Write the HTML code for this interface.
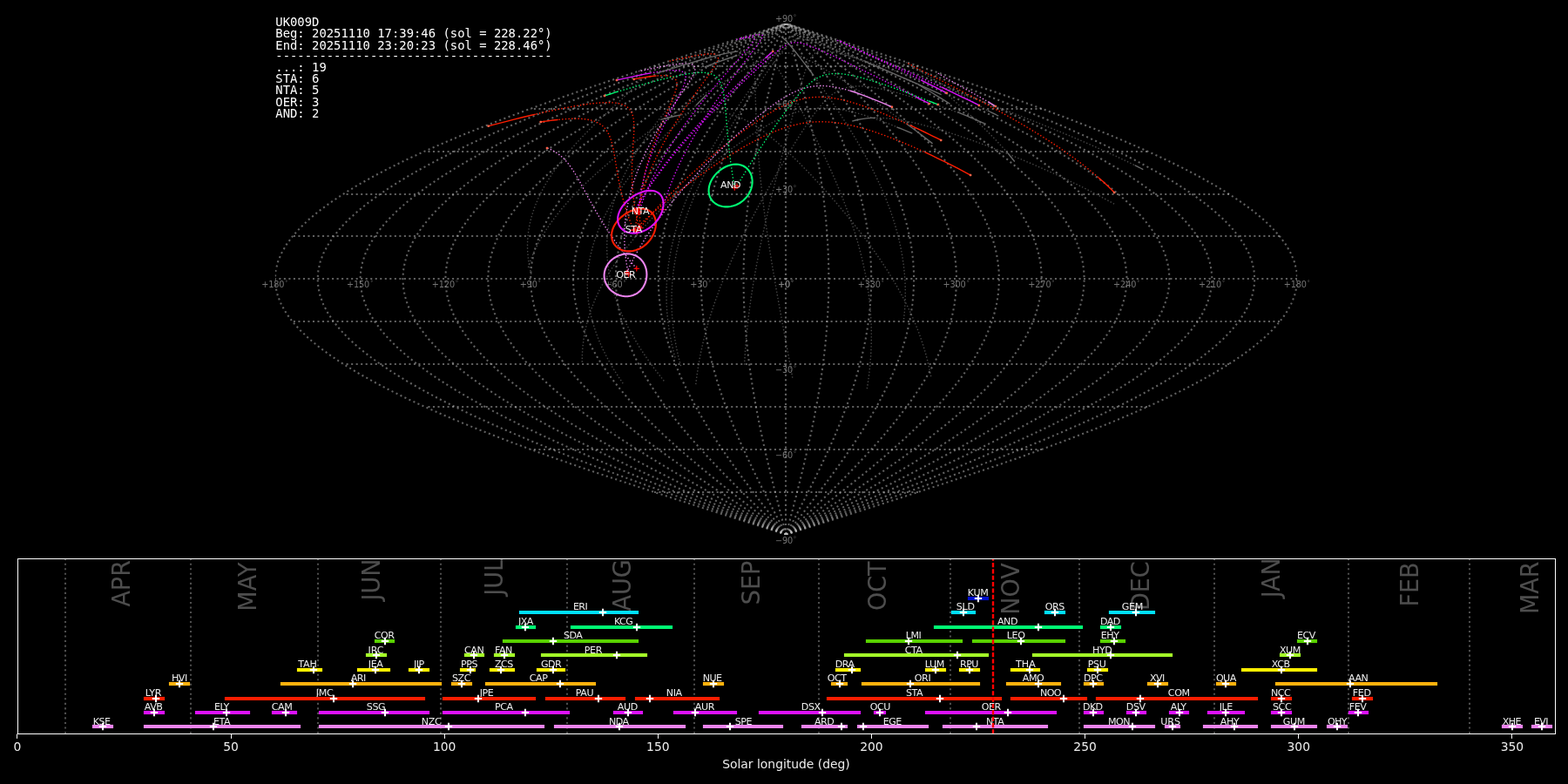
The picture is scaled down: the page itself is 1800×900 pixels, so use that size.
<!DOCTYPE html>
<html lang="en">
<head>
<meta charset="utf-8">
<title>UK009D radiant map</title>
<style>
html,body{margin:0;padding:0;background:#000;overflow:hidden}
svg{display:block;will-change:transform}
text{white-space:pre}
</style>
</head>
<body>
<svg width="1800" height="900" viewBox="0 0 1800 900" role="img" aria-label="UK009D meteor radiant map and shower activity">
<rect width="1800" height="900" fill="#000000"/>
<clipPath id="mapclip"><rect x="315.74" y="26.94" width="1173.42" height="586.71"/></clipPath>
<g id="grid" clip-path="url(#mapclip)" fill="none" stroke="#c0c0c0" stroke-opacity="0.5" stroke-width="2.08" stroke-dasharray="2.08 3.44">
<g stroke-dashoffset="0">
<path d="M902 614 L902 27"/>
<path d="M902.45 613.65 L899.89 603.88 L897.34 594.1 L894.8 584.32 L892.28 574.54 L889.8 564.76 L887.34 554.98 L884.93 545.21 L882.56 535.43 L880.25 525.65 L878 515.87 L875.82 506.09 L873.71 496.31 L871.68 486.53 L869.73 476.76 L867.88 466.98 L866.12 457.2 L864.45 447.42 L862.9 437.64 L861.45 427.86 L860.11 418.09 L858.89 408.31 L857.78 398.53 L856.8 388.75 L855.95 378.97 L855.22 369.19 L854.63 359.41 L854.16 349.64 L853.83 339.86 L853.62 330.08 L853.56 320.3 L853.62 310.52 L853.83 300.74 L854.16 290.96 L854.63 281.19 L855.22 271.41 L855.95 261.63 L856.8 251.85 L857.78 242.07 L858.89 232.29 L860.11 222.52 L861.45 212.74 L862.9 202.96 L864.45 193.18 L866.12 183.4 L867.88 173.62 L869.73 163.84 L871.68 154.07 L873.71 144.29 L875.82 134.51 L878 124.73 L880.25 114.95 L882.56 105.17 L884.93 95.39 L887.34 85.62 L889.8 75.84 L892.28 66.06 L894.8 56.28 L897.34 46.5 L899.89 36.72 L902.45 26.94"/>
<path d="M902.45 613.65 L897.33 603.88 L892.23 594.1 L887.15 584.32 L882.12 574.54 L877.14 564.76 L872.23 554.98 L867.41 545.21 L862.68 535.43 L858.06 525.65 L853.56 515.87 L849.19 506.09 L844.97 496.31 L840.91 486.53 L837.02 476.76 L833.31 466.98 L829.78 457.2 L826.46 447.42 L823.34 437.64 L820.44 427.86 L817.77 418.09 L815.32 408.31 L813.12 398.53 L811.16 388.75 L809.45 378.97 L808 369.19 L806.8 359.41 L805.87 349.64 L805.2 339.86 L804.8 330.08 L804.67 320.3 L804.8 310.52 L805.2 300.74 L805.87 290.96 L806.8 281.19 L808 271.41 L809.45 261.63 L811.16 251.85 L813.12 242.07 L815.32 232.29 L817.77 222.52 L820.44 212.74 L823.34 202.96 L826.46 193.18 L829.78 183.4 L833.31 173.62 L837.02 163.84 L840.91 154.07 L844.97 144.29 L849.19 134.51 L853.56 124.73 L858.06 114.95 L862.68 105.17 L867.41 95.39 L872.23 85.62 L877.14 75.84 L882.12 66.06 L887.15 56.28 L892.23 46.5 L897.33 36.72 L902.45 26.94"/>
<path d="M902.45 613.65 L894.77 603.88 L887.12 594.1 L879.5 584.32 L871.95 574.54 L864.49 564.76 L857.12 554.98 L849.89 545.21 L842.79 535.43 L835.86 525.65 L829.11 515.87 L822.56 506.09 L816.24 496.31 L810.14 486.53 L804.3 476.76 L798.73 466.98 L793.45 457.2 L788.46 447.42 L783.79 437.64 L779.44 427.86 L775.42 418.09 L771.76 408.31 L768.45 398.53 L765.51 388.75 L762.95 378.97 L760.77 369.19 L758.98 359.41 L757.58 349.64 L756.58 339.86 L755.97 330.08 L755.77 320.3 L755.97 310.52 L756.58 300.74 L757.58 290.96 L758.98 281.19 L760.77 271.41 L762.95 261.63 L765.51 251.85 L768.45 242.07 L771.76 232.29 L775.42 222.52 L779.44 212.74 L783.79 202.96 L788.46 193.18 L793.45 183.4 L798.73 173.62 L804.3 163.84 L810.14 154.07 L816.24 144.29 L822.56 134.51 L829.11 124.73 L835.86 114.95 L842.79 105.17 L849.89 95.39 L857.12 85.62 L864.49 75.84 L871.95 66.06 L879.5 56.28 L887.12 46.5 L894.77 36.72 L902.45 26.94"/>
<path d="M902.45 613.65 L892.21 603.88 L882.01 594.1 L871.86 584.32 L861.79 574.54 L851.83 564.76 L842.02 554.98 L832.36 545.21 L822.9 535.43 L813.66 525.65 L804.66 515.87 L795.93 506.09 L787.5 496.31 L779.37 486.53 L771.59 476.76 L764.16 466.98 L757.11 457.2 L750.46 447.42 L744.23 437.64 L738.43 427.86 L733.08 418.09 L728.2 408.31 L723.79 398.53 L719.87 388.75 L716.45 378.97 L713.54 369.19 L711.15 359.41 L709.29 349.64 L707.95 339.86 L707.15 330.08 L706.88 320.3 L707.15 310.52 L707.95 300.74 L709.29 290.96 L711.15 281.19 L713.54 271.41 L716.45 261.63 L719.87 251.85 L723.79 242.07 L728.2 232.29 L733.08 222.52 L738.43 212.74 L744.23 202.96 L750.46 193.18 L757.11 183.4 L764.16 173.62 L771.59 163.84 L779.37 154.07 L787.5 144.29 L795.93 134.51 L804.66 124.73 L813.66 114.95 L822.9 105.17 L832.36 95.39 L842.02 85.62 L851.83 75.84 L861.79 66.06 L871.86 56.28 L882.01 46.5 L892.21 36.72 L902.45 26.94"/>
<path d="M902.45 613.65 L889.66 603.88 L876.9 594.1 L864.21 584.32 L851.62 574.54 L839.18 564.76 L826.91 554.98 L814.84 545.21 L803.02 535.43 L791.47 525.65 L780.22 515.87 L769.31 506.09 L758.76 496.31 L748.6 486.53 L738.87 476.76 L729.59 466.98 L720.78 457.2 L712.47 447.42 L704.68 437.64 L697.43 427.86 L690.74 418.09 L684.63 408.31 L679.12 398.53 L674.22 388.75 L669.95 378.97 L666.32 369.19 L663.33 359.41 L661 349.64 L659.33 339.86 L658.32 330.08 L657.99 320.3 L658.32 310.52 L659.33 300.74 L661 290.96 L663.33 281.19 L666.32 271.41 L669.95 261.63 L674.22 251.85 L679.12 242.07 L684.63 232.29 L690.74 222.52 L697.43 212.74 L704.68 202.96 L712.47 193.18 L720.78 183.4 L729.59 173.62 L738.87 163.84 L748.6 154.07 L758.76 144.29 L769.31 134.51 L780.22 124.73 L791.47 114.95 L803.02 105.17 L814.84 95.39 L826.91 85.62 L839.18 75.84 L851.62 66.06 L864.21 56.28 L876.9 46.5 L889.66 36.72 L902.45 26.94"/>
<path d="M902.45 613.65 L887.1 603.88 L871.79 594.1 L856.56 584.32 L841.46 574.54 L826.52 564.76 L811.8 554.98 L797.32 545.21 L783.13 535.43 L769.27 525.65 L755.77 515.87 L742.68 506.09 L730.02 496.31 L717.84 486.53 L706.16 476.76 L695.02 466.98 L684.44 457.2 L674.47 447.42 L665.12 437.64 L656.42 427.86 L648.4 418.09 L641.07 408.31 L634.46 398.53 L628.58 388.75 L623.45 378.97 L619.09 369.19 L615.51 359.41 L612.71 349.64 L610.7 339.86 L609.5 330.08 L609.1 320.3 L609.5 310.52 L610.7 300.74 L612.71 290.96 L615.51 281.19 L619.09 271.41 L623.45 261.63 L628.58 251.85 L634.46 242.07 L641.07 232.29 L648.4 222.52 L656.42 212.74 L665.12 202.96 L674.47 193.18 L684.44 183.4 L695.02 173.62 L706.16 163.84 L717.84 154.07 L730.02 144.29 L742.68 134.51 L755.77 124.73 L769.27 114.95 L783.13 105.17 L797.32 95.39 L811.8 85.62 L826.52 75.84 L841.46 66.06 L856.56 56.28 L871.79 46.5 L887.1 36.72 L902.45 26.94"/>
<path d="M902.45 613.65 L884.54 603.88 L866.68 594.1 L848.91 584.32 L831.29 574.54 L813.87 564.76 L796.69 554.98 L779.8 545.21 L763.25 535.43 L747.07 525.65 L731.33 515.87 L716.05 506.09 L701.28 496.31 L687.07 486.53 L673.44 476.76 L660.44 466.98 L648.11 457.2 L636.47 447.42 L625.57 437.64 L615.42 427.86 L606.05 418.09 L597.51 408.31 L589.79 398.53 L582.93 388.75 L576.95 378.97 L571.86 369.19 L567.68 359.41 L564.42 349.64 L562.08 339.86 L560.67 330.08 L560.2 320.3 L560.67 310.52 L562.08 300.74 L564.42 290.96 L567.68 281.19 L571.86 271.41 L576.95 261.63 L582.93 251.85 L589.79 242.07 L597.51 232.29 L606.05 222.52 L615.42 212.74 L625.57 202.96 L636.47 193.18 L648.11 183.4 L660.44 173.62 L673.44 163.84 L687.07 154.07 L701.28 144.29 L716.05 134.51 L731.33 124.73 L747.07 114.95 L763.25 105.17 L779.8 95.39 L796.69 85.62 L813.87 75.84 L831.29 66.06 L848.91 56.28 L866.68 46.5 L884.54 36.72 L902.45 26.94"/>
<path d="M902.45 613.65 L881.98 603.88 L861.56 594.1 L841.26 584.32 L821.13 574.54 L801.22 564.76 L781.58 554.98 L762.28 545.21 L743.36 535.43 L724.88 525.65 L706.88 515.87 L689.42 506.09 L672.54 496.31 L656.3 486.53 L640.73 476.76 L625.87 466.98 L611.78 457.2 L598.48 447.42 L586.01 437.64 L574.41 427.86 L563.71 418.09 L553.94 408.31 L545.13 398.53 L537.29 388.75 L530.45 378.97 L524.64 369.19 L519.86 359.41 L516.13 349.64 L513.45 339.86 L511.85 330.08 L511.31 320.3 L511.85 310.52 L513.45 300.74 L516.13 290.96 L519.86 281.19 L524.64 271.41 L530.45 261.63 L537.29 251.85 L545.13 242.07 L553.94 232.29 L563.71 222.52 L574.41 212.74 L586.01 202.96 L598.48 193.18 L611.78 183.4 L625.87 173.62 L640.73 163.84 L656.3 154.07 L672.54 144.29 L689.42 134.51 L706.88 124.73 L724.88 114.95 L743.36 105.17 L762.28 95.39 L781.58 85.62 L801.22 75.84 L821.13 66.06 L841.26 56.28 L861.56 46.5 L881.98 36.72 L902.45 26.94"/>
<path d="M902.45 613.65 L879.42 603.88 L856.45 594.1 L833.61 584.32 L810.96 574.54 L788.56 564.76 L766.47 554.98 L744.76 545.21 L723.47 535.43 L702.68 525.65 L682.43 515.87 L662.79 506.09 L643.81 496.31 L625.53 486.53 L608.01 476.76 L591.3 466.98 L575.44 457.2 L560.48 447.42 L546.46 437.64 L533.41 427.86 L521.37 418.09 L510.38 408.31 L500.46 398.53 L491.64 388.75 L483.95 378.97 L477.41 369.19 L472.03 359.41 L467.84 349.64 L464.83 339.86 L463.02 330.08 L462.42 320.3 L463.02 310.52 L464.83 300.74 L467.84 290.96 L472.03 281.19 L477.41 271.41 L483.95 261.63 L491.64 251.85 L500.46 242.07 L510.38 232.29 L521.37 222.52 L533.41 212.74 L546.46 202.96 L560.48 193.18 L575.44 183.4 L591.3 173.62 L608.01 163.84 L625.53 154.07 L643.81 144.29 L662.79 134.51 L682.43 124.73 L702.68 114.95 L723.47 105.17 L744.76 95.39 L766.47 85.62 L788.56 75.84 L810.96 66.06 L833.61 56.28 L856.45 46.5 L879.42 36.72 L902.45 26.94"/>
<path d="M902.45 613.65 L876.86 603.88 L851.34 594.1 L825.97 584.32 L800.8 574.54 L775.91 564.76 L751.36 554.98 L727.23 545.21 L703.59 535.43 L680.48 525.65 L657.99 515.87 L636.16 506.09 L615.07 496.31 L594.76 486.53 L575.3 476.76 L556.73 466.98 L539.11 457.2 L522.48 447.42 L506.9 437.64 L492.4 427.86 L479.03 418.09 L466.81 408.31 L455.79 398.53 L446 388.75 L437.45 378.97 L430.18 369.19 L424.21 359.41 L419.54 349.64 L416.2 339.86 L414.2 330.08 L413.53 320.3 L414.2 310.52 L416.2 300.74 L419.54 290.96 L424.21 281.19 L430.18 271.41 L437.45 261.63 L446 251.85 L455.79 242.07 L466.81 232.29 L479.03 222.52 L492.4 212.74 L506.9 202.96 L522.48 193.18 L539.11 183.4 L556.73 173.62 L575.3 163.84 L594.76 154.07 L615.07 144.29 L636.16 134.51 L657.99 124.73 L680.48 114.95 L703.59 105.17 L727.23 95.39 L751.36 85.62 L775.91 75.84 L800.8 66.06 L825.97 56.28 L851.34 46.5 L876.86 36.72 L902.45 26.94"/>
<path d="M902.45 613.65 L874.3 603.88 L846.23 594.1 L818.32 584.32 L790.63 574.54 L763.25 564.76 L736.26 554.98 L709.71 545.21 L683.7 535.43 L658.29 525.65 L633.54 515.87 L609.53 506.09 L586.33 496.31 L563.99 486.53 L542.58 476.76 L522.16 466.98 L502.77 457.2 L484.49 447.42 L467.35 437.64 L451.4 427.86 L436.69 418.09 L423.25 408.31 L411.13 398.53 L400.35 388.75 L390.96 378.97 L382.96 369.19 L376.39 359.41 L371.25 349.64 L367.58 339.86 L365.37 330.08 L364.63 320.3 L365.37 310.52 L367.58 300.74 L371.25 290.96 L376.39 281.19 L382.96 271.41 L390.96 261.63 L400.35 251.85 L411.13 242.07 L423.25 232.29 L436.69 222.52 L451.4 212.74 L467.35 202.96 L484.49 193.18 L502.77 183.4 L522.16 173.62 L542.58 163.84 L563.99 154.07 L586.33 144.29 L609.53 134.51 L633.54 124.73 L658.29 114.95 L683.7 105.17 L709.71 95.39 L736.26 85.62 L763.25 75.84 L790.63 66.06 L818.32 56.28 L846.23 46.5 L874.3 36.72 L902.45 26.94"/>
<path d="M902.45 613.65 L871.74 603.88 L841.12 594.1 L810.67 584.32 L780.47 574.54 L750.6 564.76 L721.15 554.98 L692.19 545.21 L663.81 535.43 L636.09 525.65 L609.1 515.87 L582.9 506.09 L557.59 496.31 L533.22 486.53 L509.86 476.76 L487.58 466.98 L466.44 457.2 L446.49 447.42 L427.79 437.64 L410.39 427.86 L394.34 418.09 L379.69 408.31 L366.46 398.53 L354.71 388.75 L344.46 378.97 L335.73 369.19 L328.56 359.41 L322.96 349.64 L318.95 339.86 L316.54 330.08 L315.74 320.3 L316.54 310.52 L318.95 300.74 L322.96 290.96 L328.56 281.19 L335.73 271.41 L344.46 261.63 L354.71 251.85 L366.46 242.07 L379.69 232.29 L394.34 222.52 L410.39 212.74 L427.79 202.96 L446.49 193.18 L466.44 183.4 L487.58 173.62 L509.86 163.84 L533.22 154.07 L557.59 144.29 L582.9 134.51 L609.1 124.73 L636.09 114.95 L663.81 105.17 L692.19 95.39 L721.15 85.62 L750.6 75.84 L780.47 66.06 L810.67 56.28 L841.12 46.5 L871.74 36.72 L902.45 26.94"/>
<path d="M902.45 613.65 L930.6 603.88 L958.67 594.1 L986.58 584.32 L1014.27 574.54 L1041.65 564.76 L1068.64 554.98 L1095.19 545.21 L1121.2 535.43 L1146.61 525.65 L1171.36 515.87 L1195.37 506.09 L1218.57 496.31 L1240.91 486.53 L1262.32 476.76 L1282.74 466.98 L1302.13 457.2 L1320.41 447.42 L1337.55 437.64 L1353.5 427.86 L1368.21 418.09 L1381.65 408.31 L1393.77 398.53 L1404.55 388.75 L1413.94 378.97 L1421.94 369.19 L1428.51 359.41 L1433.65 349.64 L1437.32 339.86 L1439.53 330.08 L1440.27 320.3 L1439.53 310.52 L1437.32 300.74 L1433.65 290.96 L1428.51 281.19 L1421.94 271.41 L1413.94 261.63 L1404.55 251.85 L1393.77 242.07 L1381.65 232.29 L1368.21 222.52 L1353.5 212.74 L1337.55 202.96 L1320.41 193.18 L1302.13 183.4 L1282.74 173.62 L1262.32 163.84 L1240.91 154.07 L1218.57 144.29 L1195.37 134.51 L1171.36 124.73 L1146.61 114.95 L1121.2 105.17 L1095.19 95.39 L1068.64 85.62 L1041.65 75.84 L1014.27 66.06 L986.58 56.28 L958.67 46.5 L930.6 36.72 L902.45 26.94"/>
<path d="M902.45 613.65 L928.04 603.88 L953.56 594.1 L978.93 584.32 L1004.1 574.54 L1028.99 564.76 L1053.54 554.98 L1077.67 545.21 L1101.31 535.43 L1124.42 525.65 L1146.91 515.87 L1168.74 506.09 L1189.83 496.31 L1210.14 486.53 L1229.6 476.76 L1248.17 466.98 L1265.79 457.2 L1282.42 447.42 L1298 437.64 L1312.5 427.86 L1325.87 418.09 L1338.09 408.31 L1349.11 398.53 L1358.9 388.75 L1367.45 378.97 L1374.72 369.19 L1380.69 359.41 L1385.36 349.64 L1388.7 339.86 L1390.7 330.08 L1391.38 320.3 L1390.7 310.52 L1388.7 300.74 L1385.36 290.96 L1380.69 281.19 L1374.72 271.41 L1367.45 261.63 L1358.9 251.85 L1349.11 242.07 L1338.09 232.29 L1325.87 222.52 L1312.5 212.74 L1298 202.96 L1282.42 193.18 L1265.79 183.4 L1248.17 173.62 L1229.6 163.84 L1210.14 154.07 L1189.83 144.29 L1168.74 134.51 L1146.91 124.73 L1124.42 114.95 L1101.31 105.17 L1077.67 95.39 L1053.54 85.62 L1028.99 75.84 L1004.1 66.06 L978.93 56.28 L953.56 46.5 L928.04 36.72 L902.45 26.94"/>
<path d="M902.45 613.65 L925.48 603.88 L948.45 594.1 L971.29 584.32 L993.94 574.54 L1016.34 564.76 L1038.43 554.98 L1060.14 545.21 L1081.43 535.43 L1102.22 525.65 L1122.47 515.87 L1142.11 506.09 L1161.09 496.31 L1179.37 486.53 L1196.89 476.76 L1213.6 466.98 L1229.46 457.2 L1244.42 447.42 L1258.44 437.64 L1271.49 427.86 L1283.53 418.09 L1294.52 408.31 L1304.44 398.53 L1313.26 388.75 L1320.95 378.97 L1327.49 369.19 L1332.87 359.41 L1337.06 349.64 L1340.07 339.86 L1341.88 330.08 L1342.48 320.3 L1341.88 310.52 L1340.07 300.74 L1337.06 290.96 L1332.87 281.19 L1327.49 271.41 L1320.95 261.63 L1313.26 251.85 L1304.44 242.07 L1294.52 232.29 L1283.53 222.52 L1271.49 212.74 L1258.44 202.96 L1244.42 193.18 L1229.46 183.4 L1213.6 173.62 L1196.89 163.84 L1179.37 154.07 L1161.09 144.29 L1142.11 134.51 L1122.47 124.73 L1102.22 114.95 L1081.43 105.17 L1060.14 95.39 L1038.43 85.62 L1016.34 75.84 L993.94 66.06 L971.29 56.28 L948.45 46.5 L925.48 36.72 L902.45 26.94"/>
<path d="M902.45 613.65 L922.92 603.88 L943.34 594.1 L963.64 584.32 L983.77 574.54 L1003.68 564.76 L1023.32 554.98 L1042.62 545.21 L1061.54 535.43 L1080.02 525.65 L1098.02 515.87 L1115.48 506.09 L1132.36 496.31 L1148.6 486.53 L1164.17 476.76 L1179.03 466.98 L1193.12 457.2 L1206.42 447.42 L1218.89 437.64 L1230.49 427.86 L1241.19 418.09 L1250.96 408.31 L1259.77 398.53 L1267.61 388.75 L1274.45 378.97 L1280.26 369.19 L1285.04 359.41 L1288.77 349.64 L1291.45 339.86 L1293.05 330.08 L1293.59 320.3 L1293.05 310.52 L1291.45 300.74 L1288.77 290.96 L1285.04 281.19 L1280.26 271.41 L1274.45 261.63 L1267.61 251.85 L1259.77 242.07 L1250.96 232.29 L1241.19 222.52 L1230.49 212.74 L1218.89 202.96 L1206.42 193.18 L1193.12 183.4 L1179.03 173.62 L1164.17 163.84 L1148.6 154.07 L1132.36 144.29 L1115.48 134.51 L1098.02 124.73 L1080.02 114.95 L1061.54 105.17 L1042.62 95.39 L1023.32 85.62 L1003.68 75.84 L983.77 66.06 L963.64 56.28 L943.34 46.5 L922.92 36.72 L902.45 26.94"/>
<path d="M902.45 613.65 L920.36 603.88 L938.22 594.1 L955.99 584.32 L973.61 574.54 L991.03 564.76 L1008.21 554.98 L1025.1 545.21 L1041.65 535.43 L1057.83 525.65 L1073.57 515.87 L1088.85 506.09 L1103.62 496.31 L1117.83 486.53 L1131.46 476.76 L1144.46 466.98 L1156.79 457.2 L1168.43 447.42 L1179.33 437.64 L1189.48 427.86 L1198.85 418.09 L1207.39 408.31 L1215.11 398.53 L1221.97 388.75 L1227.95 378.97 L1233.04 369.19 L1237.22 359.41 L1240.48 349.64 L1242.82 339.86 L1244.23 330.08 L1244.7 320.3 L1244.23 310.52 L1242.82 300.74 L1240.48 290.96 L1237.22 281.19 L1233.04 271.41 L1227.95 261.63 L1221.97 251.85 L1215.11 242.07 L1207.39 232.29 L1198.85 222.52 L1189.48 212.74 L1179.33 202.96 L1168.43 193.18 L1156.79 183.4 L1144.46 173.62 L1131.46 163.84 L1117.83 154.07 L1103.62 144.29 L1088.85 134.51 L1073.57 124.73 L1057.83 114.95 L1041.65 105.17 L1025.1 95.39 L1008.21 85.62 L991.03 75.84 L973.61 66.06 L955.99 56.28 L938.22 46.5 L920.36 36.72 L902.45 26.94"/>
<path d="M902.45 613.65 L917.8 603.88 L933.11 594.1 L948.34 584.32 L963.44 574.54 L978.38 564.76 L993.1 554.98 L1007.58 545.21 L1021.77 535.43 L1035.63 525.65 L1049.13 515.87 L1062.22 506.09 L1074.88 496.31 L1087.06 486.53 L1098.74 476.76 L1109.88 466.98 L1120.46 457.2 L1130.43 447.42 L1139.78 437.64 L1148.48 427.86 L1156.5 418.09 L1163.83 408.31 L1170.44 398.53 L1176.32 388.75 L1181.45 378.97 L1185.81 369.19 L1189.39 359.41 L1192.19 349.64 L1194.2 339.86 L1195.4 330.08 L1195.81 320.3 L1195.4 310.52 L1194.2 300.74 L1192.19 290.96 L1189.39 281.19 L1185.81 271.41 L1181.45 261.63 L1176.32 251.85 L1170.44 242.07 L1163.83 232.29 L1156.5 222.52 L1148.48 212.74 L1139.78 202.96 L1130.43 193.18 L1120.46 183.4 L1109.88 173.62 L1098.74 163.84 L1087.06 154.07 L1074.88 144.29 L1062.22 134.51 L1049.13 124.73 L1035.63 114.95 L1021.77 105.17 L1007.58 95.39 L993.1 85.62 L978.38 75.84 L963.44 66.06 L948.34 56.28 L933.11 46.5 L917.8 36.72 L902.45 26.94"/>
<path d="M902.45 613.65 L915.24 603.88 L928 594.1 L940.69 584.32 L953.28 574.54 L965.72 564.76 L977.99 554.98 L990.06 545.21 L1001.88 535.43 L1013.43 525.65 L1024.68 515.87 L1035.59 506.09 L1046.14 496.31 L1056.3 486.53 L1066.03 476.76 L1075.31 466.98 L1084.12 457.2 L1092.43 447.42 L1100.22 437.64 L1107.47 427.86 L1114.16 418.09 L1120.27 408.31 L1125.78 398.53 L1130.68 388.75 L1134.95 378.97 L1138.58 369.19 L1141.57 359.41 L1143.9 349.64 L1145.57 339.86 L1146.58 330.08 L1146.91 320.3 L1146.58 310.52 L1145.57 300.74 L1143.9 290.96 L1141.57 281.19 L1138.58 271.41 L1134.95 261.63 L1130.68 251.85 L1125.78 242.07 L1120.27 232.29 L1114.16 222.52 L1107.47 212.74 L1100.22 202.96 L1092.43 193.18 L1084.12 183.4 L1075.31 173.62 L1066.03 163.84 L1056.3 154.07 L1046.14 144.29 L1035.59 134.51 L1024.68 124.73 L1013.43 114.95 L1001.88 105.17 L990.06 95.39 L977.99 85.62 L965.72 75.84 L953.28 66.06 L940.69 56.28 L928 46.5 L915.24 36.72 L902.45 26.94"/>
<path d="M902.45 613.65 L912.69 603.88 L922.89 594.1 L933.04 584.32 L943.11 574.54 L953.07 564.76 L962.88 554.98 L972.54 545.21 L982 535.43 L991.24 525.65 L1000.24 515.87 L1008.97 506.09 L1017.4 496.31 L1025.53 486.53 L1033.31 476.76 L1040.74 466.98 L1047.79 457.2 L1054.44 447.42 L1060.67 437.64 L1066.47 427.86 L1071.82 418.09 L1076.7 408.31 L1081.11 398.53 L1085.03 388.75 L1088.45 378.97 L1091.36 369.19 L1093.75 359.41 L1095.61 349.64 L1096.95 339.86 L1097.75 330.08 L1098.02 320.3 L1097.75 310.52 L1096.95 300.74 L1095.61 290.96 L1093.75 281.19 L1091.36 271.41 L1088.45 261.63 L1085.03 251.85 L1081.11 242.07 L1076.7 232.29 L1071.82 222.52 L1066.47 212.74 L1060.67 202.96 L1054.44 193.18 L1047.79 183.4 L1040.74 173.62 L1033.31 163.84 L1025.53 154.07 L1017.4 144.29 L1008.97 134.51 L1000.24 124.73 L991.24 114.95 L982 105.17 L972.54 95.39 L962.88 85.62 L953.07 75.84 L943.11 66.06 L933.04 56.28 L922.89 46.5 L912.69 36.72 L902.45 26.94"/>
<path d="M902.45 613.65 L910.13 603.88 L917.78 594.1 L925.4 584.32 L932.95 574.54 L940.41 564.76 L947.78 554.98 L955.01 545.21 L962.11 535.43 L969.04 525.65 L975.79 515.87 L982.34 506.09 L988.66 496.31 L994.76 486.53 L1000.6 476.76 L1006.17 466.98 L1011.45 457.2 L1016.44 447.42 L1021.11 437.64 L1025.46 427.86 L1029.48 418.09 L1033.14 408.31 L1036.45 398.53 L1039.39 388.75 L1041.95 378.97 L1044.13 369.19 L1045.92 359.41 L1047.32 349.64 L1048.32 339.86 L1048.93 330.08 L1049.13 320.3 L1048.93 310.52 L1048.32 300.74 L1047.32 290.96 L1045.92 281.19 L1044.13 271.41 L1041.95 261.63 L1039.39 251.85 L1036.45 242.07 L1033.14 232.29 L1029.48 222.52 L1025.46 212.74 L1021.11 202.96 L1016.44 193.18 L1011.45 183.4 L1006.17 173.62 L1000.6 163.84 L994.76 154.07 L988.66 144.29 L982.34 134.51 L975.79 124.73 L969.04 114.95 L962.11 105.17 L955.01 95.39 L947.78 85.62 L940.41 75.84 L932.95 66.06 L925.4 56.28 L917.78 46.5 L910.13 36.72 L902.45 26.94"/>
<path d="M902.45 613.65 L907.57 603.88 L912.67 594.1 L917.75 584.32 L922.78 574.54 L927.76 564.76 L932.67 554.98 L937.49 545.21 L942.22 535.43 L946.84 525.65 L951.34 515.87 L955.71 506.09 L959.93 496.31 L963.99 486.53 L967.88 476.76 L971.59 466.98 L975.12 457.2 L978.44 447.42 L981.56 437.64 L984.46 427.86 L987.13 418.09 L989.58 408.31 L991.78 398.53 L993.74 388.75 L995.45 378.97 L996.9 369.19 L998.1 359.41 L999.03 349.64 L999.7 339.86 L1000.1 330.08 L1000.24 320.3 L1000.1 310.52 L999.7 300.74 L999.03 290.96 L998.1 281.19 L996.9 271.41 L995.45 261.63 L993.74 251.85 L991.78 242.07 L989.58 232.29 L987.13 222.52 L984.46 212.74 L981.56 202.96 L978.44 193.18 L975.12 183.4 L971.59 173.62 L967.88 163.84 L963.99 154.07 L959.93 144.29 L955.71 134.51 L951.34 124.73 L946.84 114.95 L942.22 105.17 L937.49 95.39 L932.67 85.62 L927.76 75.84 L922.78 66.06 L917.75 56.28 L912.67 46.5 L907.57 36.72 L902.45 26.94"/>
<path d="M902.45 613.65 L905.01 603.88 L907.56 594.1 L910.1 584.32 L912.62 574.54 L915.1 564.76 L917.56 554.98 L919.97 545.21 L922.34 535.43 L924.65 525.65 L926.9 515.87 L929.08 506.09 L931.19 496.31 L933.22 486.53 L935.17 476.76 L937.02 466.98 L938.78 457.2 L940.45 447.42 L942 437.64 L943.45 427.86 L944.79 418.09 L946.01 408.31 L947.12 398.53 L948.1 388.75 L948.95 378.97 L949.68 369.19 L950.27 359.41 L950.74 349.64 L951.07 339.86 L951.28 330.08 L951.34 320.3 L951.28 310.52 L951.07 300.74 L950.74 290.96 L950.27 281.19 L949.68 271.41 L948.95 261.63 L948.1 251.85 L947.12 242.07 L946.01 232.29 L944.79 222.52 L943.45 212.74 L942 202.96 L940.45 193.18 L938.78 183.4 L937.02 173.62 L935.17 163.84 L933.22 154.07 L931.19 144.29 L929.08 134.51 L926.9 124.73 L924.65 114.95 L922.34 105.17 L919.97 95.39 L917.56 85.62 L915.1 75.84 L912.62 66.06 L910.1 56.28 L907.56 46.5 L905.01 36.72 L902.45 26.94"/>
<path d="M902.45 613.65 L933.16 603.88 L963.78 594.1 L994.23 584.32 L1024.43 574.54 L1054.3 564.76 L1083.75 554.98 L1112.71 545.21 L1141.09 535.43 L1168.81 525.65 L1195.81 515.87 L1222 506.09 L1247.31 496.31 L1271.68 486.53 L1295.04 476.76 L1317.32 466.98 L1338.46 457.2 L1358.41 447.42 L1377.11 437.64 L1394.51 427.86 L1410.56 418.09 L1425.21 408.31 L1438.44 398.53 L1450.19 388.75 L1460.44 378.97 L1469.17 369.19 L1476.34 359.41 L1481.94 349.64 L1485.95 339.86 L1488.36 330.08 L1489.16 320.3 L1488.36 310.52 L1485.95 300.74 L1481.94 290.96 L1476.34 281.19 L1469.17 271.41 L1460.44 261.63 L1450.19 251.85 L1438.44 242.07 L1425.21 232.29 L1410.56 222.52 L1394.51 212.74 L1377.11 202.96 L1358.41 193.18 L1338.46 183.4 L1317.32 173.62 L1295.04 163.84 L1271.68 154.07 L1247.31 144.29 L1222 134.51 L1195.81 124.73 L1168.81 114.95 L1141.09 105.17 L1112.71 95.39 L1083.75 85.62 L1054.3 75.84 L1024.43 66.06 L994.23 56.28 L963.78 46.5 L933.16 36.72 L902.45 26.94"/>
</g>
<g stroke-dashoffset="0">
<path d="M902 565 L751 565"/>
<path d="M1054 565 L902 565"/>
<path d="M902 516 L609 516"/>
<path d="M1196 516 L902 516"/>
<path d="M902 467 L488 467"/>
<path d="M1317 467 L902 467"/>
<path d="M902 418 L394 418"/>
<path d="M1411 418 L902 418"/>
<path d="M902 369 L336 369"/>
<path d="M1469 369 L902 369"/>
<path d="M902 320 L316 320"/>
<path d="M1489 320 L902 320"/>
<path d="M902 271 L336 271"/>
<path d="M1469 271 L902 271"/>
<path d="M902 223 L394 223"/>
<path d="M1411 223 L902 223"/>
<path d="M902 174 L488 174"/>
<path d="M1317 174 L902 174"/>
<path d="M902 125 L609 125"/>
<path d="M1196 125 L902 125"/>
<path d="M902 76 L751 76"/>
<path d="M1054 76 L902 76"/>
</g>
</g>
<g id="gridlabels" font-family="'DejaVu Sans','Liberation Sans',sans-serif" font-size="9.72" fill="#808080" fill-opacity="0.9" text-anchor="middle" letter-spacing="-0.15">
<text x="1488.66" y="330.3">+180<tspan font-size="6" dy="-3.9" dx="1">°</tspan></text>
<text x="1390.88" y="330.3">+210<tspan font-size="6" dy="-3.9" dx="1">°</tspan></text>
<text x="1293.09" y="330.3">+240<tspan font-size="6" dy="-3.9" dx="1">°</tspan></text>
<text x="1195.31" y="330.3">+270<tspan font-size="6" dy="-3.9" dx="1">°</tspan></text>
<text x="1097.52" y="330.3">+300<tspan font-size="6" dy="-3.9" dx="1">°</tspan></text>
<text x="999.74" y="330.3">+330<tspan font-size="6" dy="-3.9" dx="1">°</tspan></text>
<text x="901.95" y="330.3">+0<tspan font-size="6" dy="-3.9" dx="1">°</tspan></text>
<text x="901.95" y="330.3">+0<tspan font-size="6" dy="-3.9" dx="1">°</tspan></text>
<text x="804.17" y="330.3">+30<tspan font-size="6" dy="-3.9" dx="1">°</tspan></text>
<text x="706.38" y="330.3">+60<tspan font-size="6" dy="-3.9" dx="1">°</tspan></text>
<text x="608.6" y="330.3">+90<tspan font-size="6" dy="-3.9" dx="1">°</tspan></text>
<text x="510.81" y="330.3">+120<tspan font-size="6" dy="-3.9" dx="1">°</tspan></text>
<text x="413.03" y="330.3">+150<tspan font-size="6" dy="-3.9" dx="1">°</tspan></text>
<text x="315.24" y="330.3">+180<tspan font-size="6" dy="-3.9" dx="1">°</tspan></text>
<text x="901.95" y="24.94">+90<tspan font-size="6" dy="-3.9" dx="1">°</tspan></text>
<text x="901.95" y="122.73">+60<tspan font-size="6" dy="-3.9" dx="1">°</tspan></text>
<text x="901.95" y="220.52">+30<tspan font-size="6" dy="-3.9" dx="1">°</tspan></text>
<text x="901.95" y="428.09">−30<tspan font-size="6" dy="-3.9" dx="1">°</tspan></text>
<text x="901.95" y="525.87">−60<tspan font-size="6" dy="-3.9" dx="1">°</tspan></text>
<text x="901.95" y="623.65">−90<tspan font-size="6" dy="-3.9" dx="1">°</tspan></text>
</g>
<g clip-path="url(#mapclip)" fill="none" stroke="#666666" stroke-opacity="0.7" stroke-width="1.39" stroke-dasharray="1.39 2.29">
<path d="M909.77 433.64 L909.03 429.56 L908.28 425.48 L907.53 421.39 L906.77 417.31 L906.01 413.22 L905.26 409.13 L904.5 405.04 L903.74 400.95 L902.97 396.86 L902.21 392.76 L901.45 388.67 L900.69 384.57 L899.93 380.47 L899.17 376.37 L898.41 372.27 L897.66 368.17 L896.9 364.07 L896.15 359.96 L895.41 355.86 L894.66 351.76 L893.92 347.65 L893.18 343.55 L892.45 339.44 L891.73 335.34 L891 331.23 L890.29 327.13 L889.58 323.02 L888.87 318.92 L888.18 314.81 L887.48 310.71 L886.8 306.6 L886.13 302.49 L885.46 298.39 L884.8 294.29 L884.15 290.18 L883.5 286.08 L882.87 281.97 L882.25 277.87 L881.63 273.77 L881.03 269.67 L880.43 265.57 L879.85 261.47 L879.28 257.37 L878.72 253.27 L878.17 249.17 L877.63 245.08 L877.1 240.98 L876.59 236.89 L876.09 232.8 L875.6 228.71 L875.12 224.62 L874.66 220.54 L874.21 216.45 L873.77 212.37 L873.34 208.29 L872.93 204.22 L872.54 200.15 L872.15 196.08 L871.79 192.01 L871.43 187.95 L871.09 183.89 L870.76 179.83 L870.45 175.78 L870.15 171.74 L869.87 167.7 L869.6 163.66 L869.34 159.64 L869.1 155.62 L868.87 151.6 L868.66 147.6 L868.45 143.61 L868.27 139.62 L868.09 135.65 L867.92 131.7 L867.77 127.75 L867.63 123.83 L867.49 119.92 L867.36 116.04 L867.24 112.18 L867.13 108.34 L867.01 104.54 L866.9 100.78 L866.78 97.06 L866.65 93.38 L866.5 89.77 L866.32 86.23 L866.11 82.77 L865.85 79.41 L865.52 76.17 L865.09 73.07 L864.54 70.15 L863.8 67.45 L862.83 65 L861.54 62.87 L859.84 61.11 L857.6 59.78 L854.71 58.94 L851.05 58.62 L846.51 58.85"/>
<path d="M995.28 446.15 L995.97 441.84 L996.61 437.52 L997.2 433.2 L997.74 428.87 L998.23 424.54 L998.67 420.21 L999.06 415.88 L999.4 411.54 L999.69 407.2 L999.92 402.86 L1000.11 398.52 L1000.24 394.18 L1000.31 389.83 L1000.34 385.48 L1000.31 381.13 L1000.23 376.78 L1000.09 372.43 L999.91 368.08 L999.67 363.73 L999.38 359.37 L999.03 355.02 L998.63 350.66 L998.18 346.31 L997.68 341.95 L997.13 337.6 L996.52 333.24 L995.87 328.88 L995.16 324.53 L994.4 320.17 L993.59 315.81 L992.74 311.45 L991.83 307.1 L990.88 302.74 L989.87 298.38 L988.82 294.03 L987.73 289.67 L986.58 285.32 L985.39 280.96 L984.16 276.61 L982.88 272.25 L981.56 267.9 L980.19 263.55 L978.78 259.2 L977.33 254.85 L975.85 250.51 L974.32 246.16 L972.75 241.82 L971.14 237.47 L969.5 233.13 L967.83 228.79 L966.11 224.46 L964.37 220.12 L962.59 215.79 L960.78 211.47 L958.94 207.14 L957.07 202.82 L955.17 198.5 L953.24 194.19 L951.29 189.88 L949.31 185.57 L947.31 181.27 L945.28 176.98 L943.24 172.69 L941.17 168.41 L939.09 164.13 L936.99 159.86 L934.87 155.61 L932.74 151.36 L930.59 147.12 L928.43 142.9 L926.27 138.69 L924.09 134.49 L921.9 130.31 L919.71 126.15 L917.51 122.01 L915.31 117.9 L913.11 113.81 L910.9 109.76 L908.7 105.75 L906.49 101.77 L904.29 97.85 L902.09 93.99 L899.88 90.2 L897.68 86.49 L895.46 82.89 L893.24 79.4 L890.99 76.07 L888.71 72.91 L886.36 69.98 L883.92 67.31 L881.33 64.97 L878.53 63.01 L875.44 61.51 L871.95 60.52 L867.95 60.09 L863.36 60.24 L858.1 60.97 L852.14 62.23 L845.52 63.98"/>
<path d="M715.2 440.18 L712.97 436.95 L710.8 433.72 L708.69 430.49 L706.64 427.26 L704.64 424.04 L702.7 420.81 L700.83 417.58 L699.01 414.35 L697.26 411.12 L695.56 407.89 L693.93 404.67 L692.36 401.44 L690.85 398.21 L689.41 394.98 L688.02 391.75 L686.71 388.52 L685.46 385.29 L684.27 382.06 L683.15 378.83 L682.09 375.61 L681.1 372.38 L680.17 369.15 L679.32 365.92 L678.53 362.69 L677.8 359.46 L677.14 356.23 L676.55 353 L676.03 349.77 L675.58 346.54 L675.19 343.31 L674.87 340.09 L674.62 336.86 L674.44 333.63 L674.32 330.4 L674.28 327.17 L674.3 323.94 L674.39 320.71 L674.55 317.48 L674.77 314.25 L675.07 311.02 L675.43 307.79 L675.86 304.56 L676.36 301.33 L676.92 298.1 L677.56 294.88 L678.26 291.65 L679.02 288.42 L679.86 285.19 L680.76 281.96 L681.73 278.73 L682.76 275.5 L683.86 272.27 L685.02 269.04 L686.25 265.81 L687.54 262.58 L688.9 259.36 L690.32 256.13 L691.81 252.9 L693.36 249.67 L694.97 246.44 L696.64 243.21 L698.37 239.98 L700.17 236.75 L702.02 233.52 L703.94 230.3 L705.91 227.07 L707.94 223.84 L710.04 220.61 L712.18 217.38 L714.39 214.15 L716.65 210.93 L718.97 207.7 L721.34 204.47 L723.77 201.24 L726.25 198.01 L728.78 194.79 L731.36 191.56 L734 188.33 L736.68 185.11 L739.41 181.88 L742.2 178.65 L745.03 175.42 L747.9 172.2 L750.83 168.97 L753.8 165.75 L756.81 162.52 L759.86 159.29 L762.96 156.07 L766.1 152.84 L769.28 149.62 L772.5 146.39 L775.76 143.17 L779.05 139.95 L782.38 136.72 L785.75 133.5 L789.15 130.28 L792.58 127.06 L796.05 123.83 L799.55 120.61"/>
<path d="M1037.08 370.06 L1037.44 367.18 L1037.77 364.3 L1038.07 361.42 L1038.33 358.54 L1038.57 355.66 L1038.77 352.78 L1038.94 349.9 L1039.07 347.02 L1039.17 344.14 L1039.25 341.26 L1039.28 338.38 L1039.29 335.5 L1039.26 332.62 L1039.2 329.74 L1039.11 326.86 L1038.99 323.98 L1038.83 321.1 L1038.64 318.22 L1038.42 315.34 L1038.16 312.46 L1037.88 309.58 L1037.56 306.7 L1037.21 303.82 L1036.82 300.94 L1036.41 298.06 L1035.96 295.18 L1035.48 292.3 L1034.97 289.42 L1034.43 286.54 L1033.86 283.66 L1033.26 280.78 L1032.62 277.9 L1031.95 275.02 L1031.26 272.14 L1030.53 269.26 L1029.77 266.38 L1028.98 263.5 L1028.16 260.62 L1027.32 257.74 L1026.44 254.86 L1025.53 251.98 L1024.59 249.1 L1023.63 246.22 L1022.63 243.34 L1021.61 240.46 L1020.56 237.58 L1019.48 234.7 L1018.37 231.83 L1017.24 228.95 L1016.08 226.07 L1014.89 223.19 L1013.67 220.31 L1012.43 217.43 L1011.16 214.56 L1009.87 211.68 L1008.55 208.8 L1007.21 205.92 L1005.84 203.05 L1004.44 200.17 L1003.03 197.29 L1001.58 194.41 L1000.12 191.54 L998.63 188.66 L997.12 185.79 L995.59 182.91 L994.03 180.04 L992.46 177.16 L990.86 174.29 L989.24 171.41 L987.6 168.54 L985.94 165.66 L984.27 162.79 L982.57 159.92 L980.85 157.05 L979.12 154.17 L977.37 151.3 L975.6 148.43 L973.81 145.56 L972.01 142.69 L970.19 139.82 L968.35 136.96 L966.5 134.09 L964.64 131.22 L962.76 128.36 L960.87 125.49 L958.96 122.63 L957.05 119.77 L955.12 116.91 L953.17 114.05 L951.22 111.2 L949.26 108.34 L947.29 105.49 L945.31 102.64 L943.32 99.79 L941.32 96.95 L939.31 94.11 L937.3 91.27 L935.28 88.44 L933.26 85.61"/>
<path d="M775.05 410.52 L773.56 404.94 L772.19 399.36 L770.94 393.78 L769.81 388.2 L768.79 382.62 L767.9 377.04 L767.12 371.46 L766.46 365.88 L765.93 360.3 L765.52 354.71 L765.23 349.13 L765.06 343.55 L765.01 337.97 L765.09 332.38 L765.29 326.8 L765.61 321.22 L766.06 315.64 L766.63 310.05 L767.31 304.47 L768.12 298.89 L769.05 293.31 L770.1 287.73 L771.27 282.14 L772.55 276.56 L773.95 270.98 L775.47 265.4 L777.09 259.82 L778.83 254.24 L780.68 248.66 L782.64 243.08 L784.71 237.5 L786.88 231.92 L789.15 226.34 L791.52 220.76 L794 215.19 L796.57 209.61 L799.23 204.03 L801.98 198.46 L804.83 192.89 L807.76 187.31 L810.77 181.74 L813.87 176.17 L817.04 170.61 L820.29 165.04 L823.61 159.48 L827 153.91 L830.45 148.36 L833.97 142.8 L837.54 137.25 L841.17 131.7 L844.85 126.16 L848.58 120.62 L852.35 115.09 L856.17 109.57 L860.01 104.06 L863.89 98.56 L867.79 93.08 L871.72 87.61 L875.65 82.17 L879.6 76.77 L883.54 71.41 L887.47 66.12 L891.37 60.93 L895.24 55.88 L899.05 51.08 L902.82 46.69 L906.62 43.07 L910.82 40.83 L916.32 40.65 L923.93 42.62 L933.53 46.08 L944.45 50.37 L956.15 55.13 L968.31 60.14 L980.73 65.32 L993.3 70.6"/>
<path d="M781.56 420.16 L780.32 415.52 L779.15 410.87 L778.05 406.22 L777.03 401.57 L776.1 396.93 L775.23 392.28 L774.45 387.63 L773.75 382.98 L773.12 378.33 L772.58 373.67 L772.12 369.02 L771.73 364.37 L771.43 359.72 L771.21 355.07 L771.07 350.41 L771.02 345.76 L771.04 341.11 L771.15 336.46 L771.33 331.8 L771.6 327.15 L771.95 322.5 L772.38 317.85 L772.9 313.19 L773.49 308.54 L774.16 303.89 L774.91 299.23 L775.74 294.58 L776.65 289.93 L777.64 285.28 L778.7 280.62 L779.85 275.97 L781.06 271.32 L782.36 266.67 L783.72 262.02 L785.17 257.37 L786.68 252.72 L788.26 248.07 L789.92 243.42 L791.65 238.77 L793.44 234.12 L795.3 229.47 L797.23 224.83 L799.22 220.18 L801.28 215.53 L803.4 210.89 L805.57 206.25 L807.81 201.6 L810.11 196.96 L812.46 192.32 L814.87 187.68 L817.33 183.04 L819.85 178.41 L822.41 173.77 L825.02 169.14 L827.68 164.51 L830.39 159.88 L833.13 155.26 L835.92 150.64 L838.75 146.02 L841.61 141.4 L844.51 136.79 L847.44 132.19 L850.41 127.59 L853.4 122.99 L856.42 118.41 L859.46 113.83 L862.52 109.26 L865.61 104.7 L868.7 100.16 L871.81 95.63 L874.93 91.12 L878.06 86.64 L881.19 82.19 L884.31 77.77 L887.43 73.41 L890.54 69.11 L893.63 64.89 L896.7 60.8 L899.74 56.87 L902.76 53.18 L905.79 49.86 L908.91 47.07 L912.29 45.07 L916.26 44.15 L921.22 44.45 L927.44 45.94 L934.86 48.36 L943.25 51.44 L952.36 54.96 L961.97 58.78 L971.93 62.8 L982.12 66.96 L992.47 71.22 L1002.92 75.55 L1013.43 79.94 L1023.96 84.38 L1034.5 88.85 L1045.01 93.34 L1055.49 97.86"/>
<path d="M1279.05 234.16 L1271.09 229.75 L1262.98 225.37 L1254.7 221.03 L1246.28 216.73 L1237.73 212.47 L1229.06 208.27 L1220.29 204.11 L1211.43 200 L1202.49 195.96 L1193.5 191.98 L1184.47 188.07 L1175.41 184.23 L1166.34 180.47 L1157.29 176.8 L1148.26 173.23 L1139.28 169.76 L1130.37 166.4 L1121.54 163.15 L1112.81 160.03 L1104.2 157.05 L1095.74 154.22 L1087.43 151.54 L1079.29 149.03 L1071.35 146.69 L1063.61 144.55 L1056.09 142.6 L1048.79 140.87 L1041.73 139.35 L1034.91 138.07 L1028.33 137.02 L1022 136.21 L1015.9 135.65 L1010.04 135.35 L1004.4 135.3"/>
<path d="M668.27 415.66 L668.27 411.68 L668.37 407.69 L668.57 403.67 L668.86 399.64 L669.25 395.59 L669.75 391.52 L670.35 387.44 L671.05 383.35 L671.86 379.24 L672.77 375.13 L673.8 371 L674.93 366.86 L676.17 362.72 L677.53 358.57 L678.99 354.41 L680.56 350.25 L682.24 346.08 L684.03 341.9 L685.93 337.73 L687.93 333.55 L690.05 329.36 L692.27 325.18 L694.59 320.99 L697.02 316.81 L699.56 312.63 L702.19 308.44 L704.93 304.26 L707.76 300.08 L710.69 295.91 L713.72 291.74 L716.84 287.57 L720.05 283.41 L723.35 279.26 L726.74 275.11 L730.21 270.97 L733.76 266.84 L737.39 262.72 L741.1 258.61 L744.89 254.52 L748.75 250.43 L752.67 246.36 L756.66 242.3 L760.72 238.27 L764.83 234.24 L769 230.24 L773.22 226.26 L777.5 222.3 L781.82 218.36 L786.18 214.45 L790.58 210.57 L795.02 206.71 L799.49 202.89 L804 199.11 L808.52 195.35 L813.07 191.64 L817.64 187.97 L822.22 184.35 L826.81 180.78 L831.41 177.26 L836.01 173.79 L840.62 170.39 L845.22 167.05 L849.81 163.78 L854.4 160.6 L858.98 157.49 L863.55 154.47 L868.1 151.54 L872.63 148.72 L877.15 146.01 L881.65 143.41 L886.14 140.94 L890.61 138.6 L895.07 136.41 L899.53 134.37 L903.98 132.48 L908.43 130.77 L912.89 129.23 L917.37 127.88 L921.87 126.72 L926.41 125.77 L930.99 125.02 L935.63 124.48 L940.33 124.15 L945.11 124.04 L949.98 124.15 L954.94 124.47 L960.01 125.01 L965.19 125.76 L970.48 126.72 L975.9 127.88 L981.44 129.23 L987.1 130.76 L992.89 132.48 L998.8 134.36 L1004.82 136.4 L1010.96 138.59 L1017.2 140.93 L1023.54 143.4 L1029.97 146"/>
<path d="M606.38 306.97 L608.14 301.47 L610.16 295.96 L612.43 290.46 L614.95 284.95 L617.72 279.45 L620.74 273.95 L624 268.45 L627.5 262.95 L631.24 257.46 L635.21 251.96 L639.41 246.47 L643.84 240.98 L648.49 235.5 L653.35 230.01 L658.43 224.53 L663.71 219.06 L669.2 213.59 L674.88 208.12 L680.76 202.66 L686.81 197.21 L693.05 191.76 L699.45 186.32 L706.02 180.89 L712.75 175.47 L719.62 170.06 L726.64 164.66 L733.79 159.27 L741.06 153.9 L748.45 148.54 L755.95 143.2 L763.54 137.89 L771.21 132.6 L778.95 127.34 L786.76 122.12 L794.61 116.94 L802.48 111.8 L810.37 106.73 L818.25 101.72 L826.1 96.79 L833.9 91.98 L841.61 87.28 L849.2 82.75 L856.63 78.43 L863.87 74.36 L870.85 70.62 L877.55 67.31 L883.94 64.54 L890 62.43 L895.81 61.1 L901.44 60.65 L907.05 61.11 L912.77 62.46 L918.71 64.58 L924.93 67.37 L931.43 70.69 L938.19 74.43 L945.18 78.5 L952.36 82.83 L959.68 87.37 L967.11 92.06 L974.62 96.88 L982.18 101.81 L989.77 106.82 L997.37 111.89 L1004.96 117.03 L1012.52 122.21 L1020.04 127.44 L1027.5 132.7 L1034.89 137.99 L1042.2 143.3"/>
<path d="M798.74 441.2 L799.27 436.73 L799.86 432.24 L800.5 427.73 L801.19 423.2 L801.94 418.65 L802.74 414.09 L803.59 409.52 L804.51 404.93 L805.47 400.33 L806.5 395.72 L807.58 391.1 L808.72 386.47 L809.91 381.83 L811.16 377.19 L812.47 372.54 L813.83 367.88 L815.25 363.22 L816.71 358.55 L818.24 353.88 L819.81 349.21 L821.44 344.53 L823.11 339.85 L824.84 335.17 L826.62 330.48 L828.44 325.8 L830.31 321.11 L832.22 316.42 L834.18 311.74 L836.19 307.05 L838.23 302.37 L840.31 297.69 L842.44 293.01 L844.6 288.33 L846.79 283.66 L849.03 278.99 L851.29 274.33 L853.59 269.67 L855.91 265.02 L858.27 260.37 L860.65 255.73 L863.05 251.1 L865.48 246.48 L867.93 241.86 L870.41 237.26 L872.9 232.67 L875.4 228.09 L877.92 223.52 L880.46 218.97 L883.01 214.44 L885.57 209.92 L888.13 205.42 L890.71 200.94 L893.28 196.48 L895.87 192.05 L898.45 187.64 L901.04 183.27 L903.63 178.92 L906.22 174.61 L908.81 170.34 L911.39 166.11 L913.98 161.92 L916.56 157.79 L919.14 153.71 L921.71 149.69 L924.29 145.74 L926.87 141.86 L929.46 138.06 L932.05 134.36 L934.66 130.76 L937.29 127.26 L939.94 123.9 L942.63 120.67 L945.37 117.59 L948.17 114.68 L951.05 111.96 L954.04 109.44 L957.14 107.14 L960.39 105.09 L963.82 103.31 L967.46 101.8 L971.34 100.59 L975.5 99.7 L979.97 99.14 L984.78 98.91 L989.95 99.01 L995.51 99.45 L1001.48 100.23 L1007.85 101.32 L1014.62 102.71 L1021.79 104.4 L1029.34 106.35 L1037.25 108.56 L1045.5 110.99 L1054.05 113.64 L1062.89 116.49 L1071.97 119.5 L1081.27 122.68 L1090.77 126 L1100.42 129.44"/>
<path d="M762.26 437.31 L758.31 432.37 L754.46 427.42 L750.71 422.46 L747.06 417.5 L743.52 412.53 L740.09 407.56 L736.78 402.58 L733.58 397.6 L730.5 392.62 L727.54 387.63 L724.71 382.65 L722 377.66 L719.42 372.66 L716.97 367.67 L714.65 362.67 L712.47 357.68 L710.42 352.68 L708.51 347.68 L706.74 342.68 L705.11 337.68 L703.62 332.68 L702.27 327.67 L701.07 322.67 L700.01 317.67 L699.1 312.67 L698.33 307.67 L697.71 302.66 L697.23 297.66 L696.9 292.66 L696.72 287.66 L696.69 282.66 L696.8 277.67 L697.06 272.67 L697.47 267.68 L698.02 262.69 L698.72 257.7 L699.56 252.71 L700.55 247.72 L701.68 242.74 L702.95 237.76 L704.36 232.79 L705.9 227.82 L707.59 222.85 L709.41 217.89 L711.36 212.93 L713.45 207.98 L715.66 203.03 L718 198.09 L720.46 193.16 L723.04 188.24 L725.74 183.32 L728.55 178.42 L731.47 173.52 L734.5 168.64 L737.63 163.77 L740.86 158.92 L744.17 154.08 L747.58 149.27 L751.06 144.47 L754.62 139.7 L758.24 134.95 L761.92 130.24 L765.64 125.56 L769.4 120.92 L773.17 116.33 L776.95 111.8 L780.72 107.33 L784.44 102.93 L788.1 98.63 L791.65 94.43 L795.06 90.36 L798.26 86.45 L801.19 82.72 L803.75 79.22 L805.84 76 L807.31 73.11 L807.99 70.62 L807.67 68.61 L806.15 67.14 L803.2 66.27 L798.65 66.05 L792.39 66.49 L784.39 67.56 L774.71 69.22"/>
<path d="M1040.16 71.39 L1043.61 74.02 L1048.15 77.03 L1053.53 80.34 L1059.58 83.92 L1066.14 87.72 L1073.09 91.68 L1080.32 95.8 L1087.76 100.03 L1095.35 104.37 L1103.03 108.79 L1110.77 113.28 L1118.51 117.84 L1126.25 122.44 L1133.94 127.09"/>
<path d="M609.98 314.74 L608.63 309.42 L607.53 304.09 L606.66 298.76 L606.03 293.44 L605.64 288.12 L605.49 282.8 L605.59 277.49 L605.92 272.17 L606.48 266.87 L607.29 261.57 L608.33 256.27 L609.6 250.98 L611.1 245.7 L612.83 240.42 L614.79 235.16 L616.96 229.9 L619.35 224.65 L621.96 219.42 L624.77 214.2 L627.79 208.99 L631 203.8 L634.41 198.62 L638 193.47 L641.77 188.33 L645.7 183.22 L649.8 178.14 L654.04 173.08 L658.42 168.05 L662.93 163.06 L667.55 158.11 L672.27 153.21 L677.07 148.35 L681.92 143.55 L686.82 138.82 L691.73 134.16 L696.63 129.58 L701.48 125.09 L706.24 120.71 L710.87 116.46 L715.31 112.35 L719.51 108.4 L723.38 104.65 L726.85 101.11 L729.82 97.82 L732.16 94.82 L733.76 92.14 L734.48 89.84 L734.16 87.95 L732.65 86.51 L729.82 85.55 L725.55 85.1"/>
<path d="M1079.65 85.16 L1075.78 85.75 L1073.33 86.84 L1072.19 88.4 L1072.21 90.41 L1073.23 92.81 L1075.11 95.57 L1077.71 98.65 L1080.9 102.01 L1084.58 105.61 L1088.64 109.42 L1093.01 113.41 L1097.6 117.56 L1102.37 121.85 L1107.27 126.26 L1112.23 130.77 L1117.24 135.37 L1122.26 140.05 L1127.26 144.81 L1132.21 149.62 L1137.09 154.49 L1141.89 159.41 L1146.58 164.37 L1151.16 169.37 L1155.6 174.4"/>
<path d="M854.57 418.71 L854.86 413.21 L855.2 407.72 L855.57 402.22 L855.98 396.72 L856.43 391.22 L856.92 385.71 L857.46 380.2 L858.03 374.69 L858.63 369.18 L859.28 363.67 L859.97 358.16 L860.69 352.64 L861.45 347.13 L862.24 341.61 L863.07 336.09 L863.93 330.58 L864.83 325.06 L865.76 319.54 L866.72 314.02 L867.71 308.51 L868.74 302.99 L869.79 297.47 L870.87 291.96 L871.98 286.44 L873.11 280.93 L874.27 275.42 L875.46 269.9 L876.67 264.39 L877.9 258.88 L879.15 253.38 L880.42 247.87 L881.71 242.37 L883.02 236.87 L884.35 231.37 L885.69 225.88 L887.05 220.39 L888.41 214.9 L889.79 209.42 L891.19 203.94 L892.59 198.46 L894 193 L895.41 187.54 L896.83 182.08 L898.26 176.64 L899.69 171.2 L901.12 165.77 L902.56 160.36 L903.99 154.95 L905.42 149.57 L906.85 144.19 L908.28 138.84 L909.7 133.51 L911.12 128.2 L912.53 122.93 L913.94 117.69 L915.35 112.49 L916.75 107.34 L918.15 102.25 L919.56 97.23 L920.97 92.3 L922.4 87.48 L923.86 82.8 L925.38 78.3 L926.99 74.03 L928.73 70.06 L930.7 66.48 L933.02 63.39 L935.86 60.95 L939.47 59.29 L944.11 58.54 L950.01 58.76 L957.33 59.93 L966.05 61.97 L976.04 64.72 L987.11 68.04 L999.06 71.81 L1011.69 75.93 L1024.83 80.31 L1038.36 84.9 L1052.17 89.64 L1066.17 94.51 L1080.29 99.48 L1094.46 104.54 L1108.65 109.65 L1122.81 114.83 L1136.91 120.05 L1150.91 125.31 L1164.78 130.6 L1178.5 135.91 L1192.06 141.25 L1205.42 146.62 L1218.57 152 L1231.49 157.39 L1244.16 162.8 L1256.57 168.22 L1268.7 173.65 L1280.55 179.09 L1292.08 184.54 L1303.3 190"/>
<path d="M1068.71 432.16 L1068 428.53 L1067.23 424.88 L1066.43 421.21 L1065.56 417.5 L1064.65 413.78 L1063.68 410.03 L1062.66 406.27 L1061.58 402.48 L1060.44 398.68 L1059.24 394.86 L1057.98 391.02 L1056.66 387.18 L1055.27 383.31 L1053.83 379.44 L1052.32 375.56 L1050.75 371.66 L1049.12 367.76 L1047.42 363.85 L1045.66 359.93 L1043.84 356 L1041.96 352.07 L1040.02 348.13 L1038.02 344.19 L1035.95 340.24 L1033.83 336.29 L1031.65 332.34 L1029.41 328.38 L1027.11 324.43 L1024.76 320.47 L1022.35 316.51 L1019.89 312.56 L1017.38 308.6 L1014.81 304.65 L1012.2 300.7 L1009.54 296.75 L1006.82 292.81 L1004.07 288.87 L1001.26 284.94 L998.42 281.01 L995.53 277.09 L992.6 273.18 L989.64 269.27 L986.64 265.38 L983.6 261.49 L980.53 257.62 L977.43 253.75 L974.29 249.9 L971.13 246.07 L967.94 242.25 L964.73 238.44 L961.5 234.66 L958.24 230.89 L954.96 227.14 L951.67 223.41 L948.36 219.71 L945.04 216.03 L941.7 212.38 L938.35 208.75 L934.99 205.16 L931.63 201.6 L928.26 198.07 L924.88 194.58 L921.5 191.13 L918.11 187.72 L914.73 184.36 L911.34 181.04 L907.95 177.78 L904.57 174.57 L901.18 171.43 L897.79 168.34 L894.4 165.33 L891.01 162.39 L887.62 159.52 L884.22 156.74 L880.82 154.05 L877.41 151.45 L873.98 148.96 L870.54 146.57 L867.08 144.29 L863.59 142.14 L860.07 140.11 L856.51 138.22 L852.9 136.48 L849.23 134.88 L845.5 133.43 L841.7 132.15 L837.81 131.04 L833.83 130.11 L829.74 129.35 L825.53 128.77 L821.2 128.38 L816.74 128.18 L812.13 128.17 L807.37 128.35 L802.44 128.72 L797.36 129.27 L792.11 130.01 L786.68 130.92 L781.09 132.01"/>
</g>
<g clip-path="url(#mapclip)" fill="none" stroke="#ff1d00" stroke-width="1.39" stroke-dasharray="1.39 2.29">
<path d="M733.59 261.03 L732.95 258.57 L732.33 256.11 L731.75 253.66 L731.19 251.21 L730.66 248.77 L730.15 246.33 L729.68 243.89 L729.23 241.46 L728.81 239.04 L728.41 236.62 L728.04 234.2 L727.7 231.79 L727.39 229.39 L727.1 227 L726.83 224.61 L726.59 222.22 L726.38 219.85 L726.19 217.48 L726.02 215.12 L725.88 212.77 L725.76 210.42 L725.66 208.09 L725.58 205.77 L725.52 203.45 L725.49 201.15 L725.47 198.85 L725.47 196.57 L725.49 194.3 L725.52 192.04 L725.58 189.79 L725.64 187.56 L725.72 185.34 L725.81 183.14 L725.92 180.95 L726.03 178.78 L726.15 176.62 L726.28 174.48 L726.42 172.36 L726.56 170.26 L726.7 168.18 L726.84 166.12 L726.99 164.08 L727.12 162.06 L727.26 160.07 L727.38 158.11 L727.5 156.17 L727.6 154.26 L727.69 152.37 L727.76 150.52 L727.81 148.7 L727.83 146.91 L727.82 145.16 L727.79 143.44 L727.72 141.76 L727.61 140.12 L727.46 138.53 L727.26 136.97 L727.01 135.46 L726.7 134 L726.33 132.59 L725.9 131.23 L725.39 129.92 L724.81 128.67 L724.14 127.47 L723.39 126.33 L722.54 125.26 L721.6 124.25 L720.54 123.3 L719.38 122.42 L718.1 121.61 L716.69 120.87 L715.16 120.21 L713.49 119.62 L711.68 119.1 L709.73 118.67 L707.62 118.31 L705.36 118.03 L702.94 117.83 L700.36 117.71 L697.62 117.67 L694.7 117.71 L691.62 117.84 L688.36 118.04 L684.93 118.33 L681.33 118.69 L677.55 119.13 L673.61 119.65 L669.49 120.24 L665.21 120.91 L660.76 121.65 L656.16 122.47 L651.39 123.35 L646.47 124.3 L641.4 125.31 L636.19 126.39 L630.84 127.53 L625.35 128.73 L619.74 129.99 L614 131.3"/>
<path d="M727.3 264.12 L726.47 262.11 L725.66 260.11 L724.87 258.12 L724.1 256.12 L723.35 254.13 L722.61 252.15 L721.9 250.17 L721.2 248.19 L720.53 246.22 L719.87 244.25 L719.23 242.29 L718.6 240.33 L718 238.38 L717.41 236.44 L716.84 234.5 L716.28 232.56 L715.74 230.63 L715.22 228.71 L714.72 226.8 L714.23 224.89 L713.76 222.99 L713.3 221.1 L712.85 219.22 L712.42 217.34 L712.01 215.47 L711.6 213.61 L711.21 211.76 L710.84 209.92 L710.47 208.09 L710.12 206.27 L709.78 204.46 L709.44 202.66 L709.12 200.87 L708.8 199.09 L708.5 197.32 L708.2 195.57 L707.91 193.83 L707.62 192.1 L707.34 190.39 L707.06 188.68 L706.79 187 L706.52 185.33 L706.25 183.67 L705.97 182.03 L705.7 180.41 L705.43 178.8 L705.15 177.21 L704.87 175.64 L704.58 174.09 L704.29 172.56 L703.99 171.05 L703.67 169.56 L703.35 168.09 L703.01 166.64 L702.66 165.22 L702.29 163.82 L701.91 162.44 L701.5 161.09 L701.07 159.77 L700.62 158.47 L700.14 157.2 L699.64 155.96 L699.1 154.75 L698.53 153.57 L697.93 152.42 L697.29 151.3 L696.62 150.21 L695.9 149.16 L695.14 148.14 L694.33 147.16 L693.47 146.22 L692.56 145.31 L691.6 144.44 L690.58 143.61 L689.5 142.82 L688.36 142.08 L687.16 141.37 L685.89 140.7 L684.55 140.08 L683.14 139.51 L681.65 138.97 L680.09 138.49 L678.45 138.04 L676.73 137.65 L674.92 137.3 L673.03 137 L671.05 136.75 L668.98 136.54 L666.83 136.39 L664.58 136.28 L662.23 136.22 L659.79 136.21 L657.26 136.25 L654.62 136.34 L651.9 136.47 L649.07 136.66 L646.14 136.89 L643.12 137.17 L640 137.5"/>
<path d="M734.88 261.62 L734.75 259.34 L734.66 257.07 L734.59 254.79 L734.54 252.52 L734.52 250.25 L734.52 247.98 L734.54 245.71 L734.59 243.44 L734.67 241.17 L734.76 238.91 L734.89 236.65 L735.03 234.39 L735.2 232.13 L735.39 229.87 L735.61 227.62 L735.85 225.36 L736.11 223.11 L736.4 220.87 L736.7 218.62 L737.04 216.38 L737.39 214.14 L737.76 211.9 L738.16 209.66 L738.58 207.43 L739.02 205.2 L739.48 202.98 L739.96 200.76 L740.47 198.54 L740.99 196.32 L741.53 194.11 L742.1 191.91 L742.68 189.71 L743.28 187.51 L743.9 185.31 L744.54 183.13 L745.2 180.94 L745.87 178.76 L746.56 176.59 L747.27 174.43 L747.99 172.26 L748.73 170.11 L749.48 167.96 L750.25 165.82 L751.03 163.69 L751.82 161.56 L752.62 159.44 L753.44 157.34 L754.27 155.23 L755.1 153.14 L755.95 151.06 L756.8 148.99 L757.66 146.93 L758.53 144.88 L759.39 142.85 L760.27 140.82 L761.14 138.81 L762.02 136.82 L762.89 134.84 L763.76 132.87 L764.63 130.92 L765.49 128.99 L766.35 127.08 L767.19 125.19 L768.02 123.32 L768.84 121.47 L769.63 119.64 L770.41 117.84 L771.16 116.07 L771.89 114.32 L772.59 112.61 L773.25 110.92 L773.88 109.27 L774.46 107.66 L774.99 106.08 L775.48 104.55 L775.9 103.06 L776.26 101.61 L776.55 100.21 L776.77 98.86 L776.9 97.57 L776.95 96.33 L776.89 95.15 L776.73 94.04 L776.45 92.99 L776.05 92.01 L775.52 91.11 L774.84 90.28 L774.02 89.53 L773.03 88.86 L771.88 88.27 L770.55 87.78 L769.04 87.37 L767.33 87.05 L765.42 86.82 L763.31 86.69 L760.98 86.65 L758.44 86.71 L755.68 86.86 L752.7 87.1"/>
<path d="M731.05 266.1 L733.31 263.25 L735.62 260.4 L737.96 257.55 L740.33 254.71 L742.75 251.88 L745.19 249.04 L747.68 246.21 L750.19 243.39 L752.74 240.57 L755.33 237.76 L757.94 234.96 L760.58 232.16 L763.25 229.37 L765.95 226.58 L768.68 223.8 L771.43 221.03 L774.21 218.27 L777.01 215.52 L779.84 212.77 L782.69 210.04 L785.56 207.32 L788.45 204.6 L791.36 201.9 L794.28 199.21 L797.23 196.54 L800.19 193.87 L803.16 191.22 L806.15 188.59 L809.15 185.97 L812.16 183.36 L815.18 180.78 L818.21 178.21 L821.25 175.66 L824.29 173.13 L827.34 170.62 L830.39 168.14 L833.45 165.68 L836.5 163.24 L839.56 160.83 L842.62 158.45 L845.68 156.09 L848.73 153.77 L851.78 151.48 L854.83 149.23 L857.87 147.01 L860.9 144.83 L863.93 142.7 L866.95 140.61 L869.96 138.56 L872.96 136.56 L875.96 134.62 L878.94 132.72 L881.92 130.89 L884.88 129.12 L887.84 127.4 L890.79 125.76 L893.74 124.19 L896.68 122.69 L899.61 121.27 L902.54 119.93 L905.48 118.68 L908.41 117.51 L911.35 116.44 L914.3 115.46 L917.26 114.57 L920.24 113.8 L923.24 113.12 L926.26 112.55 L929.3 112.09 L932.39 111.74 L935.5 111.5 L938.66 111.38 L941.86 111.37 L945.12 111.47 L948.42 111.68 L951.78 112.01 L955.21 112.45 L958.69 113 L962.24 113.65 L965.85 114.41 L969.53 115.27 L973.28 116.23 L977.1 117.29 L980.99 118.43 L984.94 119.67 L988.96 120.99 L993.04 122.4 L997.18 123.88 L1001.39 125.44 L1005.65 127.07 L1009.97 128.76 L1014.33 130.53 L1018.75 132.35 L1023.22 134.23 L1027.72 136.16 L1032.27 138.15 L1036.85 140.19 L1041.46 142.27 L1046.1 144.4"/>
<path d="M727.87 264.35 L730.62 261.69 L733.4 259.04 L736.22 256.4 L739.07 253.76 L741.94 251.13 L744.85 248.51 L747.78 245.9 L750.74 243.3 L753.72 240.71 L756.74 238.13 L759.77 235.56 L762.83 233 L765.9 230.46 L769 227.92 L772.12 225.4 L775.26 222.89 L778.41 220.4 L781.58 217.92 L784.77 215.46 L787.96 213.02 L791.17 210.59 L794.4 208.18 L797.63 205.79 L800.87 203.42 L804.12 201.07 L807.38 198.74 L810.64 196.44 L813.91 194.15 L817.18 191.9 L820.45 189.67 L823.73 187.46 L827 185.29 L830.28 183.14 L833.55 181.03 L836.82 178.95 L840.09 176.9 L843.35 174.89 L846.61 172.91 L849.87 170.97 L853.11 169.07 L856.36 167.22 L859.59 165.41 L862.82 163.64 L866.04 161.92 L869.25 160.25 L872.45 158.63 L875.65 157.06 L878.84 155.55 L882.02 154.09 L885.19 152.69 L888.36 151.36 L891.52 150.08 L894.68 148.88 L897.83 147.74 L900.99 146.66 L904.14 145.66 L907.29 144.73 L910.45 143.88 L913.61 143.1 L916.77 142.4 L919.95 141.78 L923.13 141.24 L926.33 140.78 L929.55 140.4 L932.78 140.11 L936.03 139.9 L939.3 139.77 L942.59 139.73 L945.92 139.78 L949.27 139.91 L952.65 140.12 L956.06 140.42 L959.51 140.8 L963 141.27 L966.52 141.81 L970.08 142.44 L973.68 143.14 L977.32 143.93 L981 144.78 L984.72 145.72 L988.48 146.72 L992.28 147.8 L996.12 148.94 L1000.01 150.16 L1003.93 151.43 L1007.89 152.77 L1011.89 154.17 L1015.93 155.63 L1019.99 157.15 L1024.1 158.72 L1028.23 160.34 L1032.39 162.01 L1036.59 163.74 L1040.8 165.51 L1045.04 167.32 L1049.31 169.18 L1053.59 171.08 L1057.89 173.02 L1062.2 175"/>
<path d="M729.26 263.67 L729.67 259.6 L730.17 255.53 L730.75 251.46 L731.41 247.4 L732.14 243.33 L732.96 239.27 L733.86 235.21 L734.84 231.15 L735.89 227.1 L737.03 223.04 L738.23 218.99 L739.52 214.94 L740.88 210.9 L742.31 206.85 L743.82 202.81 L745.4 198.78 L747.05 194.74 L748.77 190.71 L750.56 186.69 L752.41 182.67 L754.33 178.66 L756.32 174.65 L758.36 170.65 L760.47 166.65 L762.64 162.66 L764.86 158.68 L767.14 154.71 L769.47 150.75 L771.85 146.8 L774.28 142.86 L776.75 138.94 L779.26 135.03 L781.81 131.13 L784.39 127.26 L787 123.4 L789.64 119.57 L792.29 115.76 L794.96 111.99 L797.63 108.24 L800.29 104.54 L802.94 100.88 L805.57 97.27 L808.14 93.72 L810.66 90.24 L813.1 86.84 L815.42 83.54 L817.6 80.35 L819.6 77.3 L821.35 74.41 L822.8 71.71 L823.85 69.25 L824.42 67.06 L824.38 65.19 L823.61 63.69 L821.95 62.61 L819.28 61.98 L815.49 61.84 L810.5 62.17 L804.29 62.98 L796.91 64.24 L788.41 65.89 L778.92 67.89 L768.54 70.19"/>
<path d="M1042.33 72.75 L1047.44 75.52 L1053.05 78.48 L1059.05 81.59 L1065.36 84.82 L1071.91 88.16 L1078.64 91.6 L1085.52 95.1 L1092.5 98.68 L1099.54 102.31 L1106.64 105.99 L1113.75 109.71 L1120.87 113.47 L1127.97 117.26 L1135.04 121.07 L1142.07 124.92 L1149.05 128.78 L1155.96 132.66 L1162.8 136.56 L1169.56 140.48 L1176.23 144.41 L1182.81 148.35 L1189.28 152.31 L1195.64 156.27 L1201.89 160.25 L1208.02 164.23 L1214.02 168.22 L1219.89 172.22 L1225.63 176.22 L1231.23 180.23 L1236.69 184.25 L1242 188.27 L1247.16 192.3 L1252.16 196.33 L1257.01 200.36 L1261.7 204.4"/>
</g>
<g clip-path="url(#mapclip)" fill="none" stroke="#dd11ff" stroke-width="1.39" stroke-dasharray="1.39 2.29">
<path d="M732.85 243.93 L733.01 241.69 L733.2 239.46 L733.42 237.22 L733.65 234.99 L733.91 232.76 L734.19 230.53 L734.5 228.3 L734.83 226.07 L735.18 223.85 L735.56 221.62 L735.95 219.4 L736.37 217.18 L736.82 214.96 L737.28 212.75 L737.77 210.53 L738.28 208.32 L738.81 206.11 L739.36 203.91 L739.93 201.7 L740.52 199.5 L741.14 197.31 L741.77 195.11 L742.42 192.92 L743.1 190.73 L743.79 188.54 L744.5 186.36 L745.24 184.18 L745.99 182.01 L746.75 179.84 L747.54 177.67 L748.34 175.51 L749.16 173.35 L750 171.2 L750.85 169.05 L751.72 166.91 L752.6 164.78 L753.5 162.64 L754.41 160.52 L755.33 158.4 L756.27 156.29 L757.22 154.19 L758.18 152.09 L759.15 150 L760.13 147.92 L761.12 145.85 L762.12 143.78 L763.12 141.73 L764.13 139.69 L765.15 137.65 L766.17 135.63 L767.19 133.62 L768.21 131.63 L769.23 129.64 L770.25 127.67 L771.27 125.72 L772.28 123.78 L773.29 121.86 L774.29 119.96 L775.27 118.08 L776.24 116.21 L777.2 114.37 L778.14 112.55 L779.05 110.76 L779.94 108.99 L780.81 107.25 L781.64 105.55 L782.43 103.87 L783.18 102.23 L783.89 100.62 L784.55 99.05 L785.15 97.53 L785.69 96.04 L786.16 94.61 L786.55 93.23 L786.86 91.89 L787.08 90.62 L787.2 89.4 L787.21 88.25 L787.1 87.17 L786.87 86.16 L786.5 85.22 L785.97 84.36 L785.29 83.59 L784.44 82.9 L783.41 82.29 L782.19 81.78 L780.77 81.37 L779.14 81.05 L777.3 80.82 L775.23 80.7 L772.93 80.68 L770.39 80.75 L767.62 80.93 L764.61 81.21 L761.36 81.58 L757.87 82.05 L754.14 82.61 L750.18 83.26 L746 84"/>
<path d="M728.72 242.41 L729.66 240.6 L730.62 238.79 L731.6 236.98 L732.59 235.17 L733.6 233.36 L734.62 231.55 L735.66 229.74 L736.72 227.93 L737.79 226.12 L738.87 224.31 L739.97 222.5 L741.09 220.69 L742.22 218.89 L743.37 217.08 L744.53 215.27 L745.71 213.46 L746.9 211.65 L748.1 209.84 L749.32 208.04 L750.56 206.23 L751.81 204.42 L753.07 202.61 L754.34 200.81 L755.63 199 L756.94 197.19 L758.25 195.39 L759.58 193.58 L760.93 191.77 L762.28 189.97 L763.65 188.16 L765.04 186.36 L766.43 184.55 L767.84 182.75 L769.26 180.94 L770.69 179.14 L772.14 177.33 L773.59 175.53 L775.06 173.73 L776.54 171.92 L778.03 170.12 L779.53 168.32 L781.05 166.52 L782.57 164.71 L784.11 162.91 L785.65 161.11 L787.21 159.31 L788.78 157.51 L790.36 155.71 L791.94 153.91 L793.54 152.11 L795.15 150.32 L796.77 148.52 L798.39 146.72 L800.03 144.93 L801.67 143.13 L803.32 141.33 L804.99 139.54 L806.66 137.75 L808.34 135.95 L810.02 134.16 L811.72 132.37 L813.42 130.58 L815.13 128.79 L816.84 127 L818.57 125.22 L820.3 123.43 L822.04 121.64 L823.78 119.86 L825.53 118.08 L827.29 116.3 L829.05 114.52 L830.81 112.74 L832.59 110.96 L834.36 109.19 L836.14 107.41 L837.93 105.64 L839.72 103.87 L841.52 102.11 L843.31 100.34 L845.11 98.58 L846.92 96.82 L848.72 95.07 L850.53 93.32 L852.34 91.57 L854.16 89.82 L855.97 88.08 L857.78 86.35 L859.6 84.62 L861.41 82.89 L863.22 81.17 L865.03 79.46 L866.84 77.76 L868.65 76.06 L870.45 74.37 L872.26 72.69 L874.05 71.02 L875.84 69.37 L877.62 67.73 L879.4 66.1"/>
<path d="M728.88 242.25 L730.51 239.28 L732.19 236.31 L733.91 233.33 L735.67 230.36 L737.47 227.39 L739.31 224.42 L741.2 221.45 L743.13 218.48 L745.09 215.51 L747.1 212.54 L749.14 209.57 L751.23 206.6 L753.35 203.63 L755.5 200.67 L757.7 197.7 L759.93 194.74 L762.2 191.77 L764.5 188.81 L766.83 185.85 L769.2 182.89 L771.6 179.93 L774.03 176.97 L776.5 174.01 L778.99 171.05 L781.52 168.1 L784.07 165.14 L786.66 162.19 L789.27 159.24 L791.91 156.29 L794.57 153.35 L797.26 150.4 L799.97 147.46 L802.71 144.52 L805.47 141.58 L808.25 138.65 L811.06 135.72 L813.88 132.79 L816.72 129.87 L819.58 126.94 L822.46 124.03 L825.35 121.12 L828.26 118.21 L831.18 115.31 L834.12 112.41 L837.06 109.53 L840.02 106.65 L842.98 103.77 L845.96 100.91 L848.93 98.06 L851.91 95.22 L854.9 92.39 L857.88 89.58 L860.86 86.79 L863.84 84.01 L866.81 81.26 L869.77 78.54 L872.72 75.84 L875.65 73.19 L878.57 70.58 L881.46 68.01 L884.32 65.51 L887.16 63.09 L889.95 60.76 L892.71 58.53 L895.43 56.45 L898.11 54.53 L900.76 52.81 L903.4 51.34 L906.05 50.17 L908.75 49.34 L911.56 48.88 L914.53 48.83 L917.73 49.19 L921.19 49.93 L924.94 51.02 L928.97 52.42 L933.26 54.08 L937.79 55.96 L942.53 58 L947.44 60.2 L952.51 62.5 L957.7 64.91 L962.99 67.39 L968.37 69.94 L973.81 72.54 L979.31 75.18 L984.86 77.87 L990.44 80.59 L996.04 83.33 L1001.66 86.1 L1007.3 88.89 L1012.94 91.7 L1018.58 94.52 L1024.21 97.36 L1029.84 100.21 L1035.46 103.07 L1041.06 105.94 L1046.64 108.81 L1052.2 111.7"/>
<path d="M733.71 243.35 L734.58 240.54 L735.48 237.73 L736.42 234.92 L737.4 232.11 L738.42 229.3 L739.48 226.49 L740.57 223.68 L741.69 220.87 L742.86 218.06 L744.06 215.25 L745.29 212.44 L746.56 209.64 L747.87 206.83 L749.21 204.02 L750.58 201.21 L751.99 198.41 L753.43 195.6 L754.91 192.79 L756.42 189.99 L757.96 187.18 L759.54 184.38 L761.14 181.57 L762.78 178.77 L764.45 175.97 L766.15 173.17 L767.88 170.36 L769.63 167.56 L771.42 164.76 L773.24 161.96 L775.09 159.16 L776.96 156.36 L778.86 153.57 L780.79 150.77 L782.74 147.98 L784.72 145.18 L786.73 142.39 L788.76 139.6 L790.81 136.81 L792.89 134.02 L794.99 131.23 L797.12 128.45 L799.26 125.66 L801.43 122.88 L803.61 120.1 L805.82 117.33 L808.04 114.55 L810.28 111.78 L812.54 109.02 L814.82 106.25 L817.11 103.49 L819.41 100.74 L821.73 97.99 L824.05 95.24 L826.39 92.5 L828.74 89.77 L831.09 87.05 L833.45 84.34 L835.81 81.63 L838.16 78.94 L840.52 76.27 L842.87 73.61 L845.2 70.97 L847.51 68.35 L849.8 65.76 L852.05 63.21 L854.25 60.7 L856.39 58.24 L858.44 55.85 L860.37 53.54 L862.13 51.35 L863.67 49.29 L864.89 47.41 L865.69 45.77 L865.9 44.43 L865.32 43.47 L863.74 42.95 L860.98 42.92 L856.96 43.39 L851.69 44.3 L845.3 45.6"/>
<path d="M965.06 47.21 L968.54 49.07 L972.57 51.11 L977.01 53.3 L981.75 55.59 L986.71 57.97 L991.84 60.43 L997.1 62.93 L1002.45 65.48 L1007.88 68.06 L1013.36 70.68 L1018.88 73.31 L1024.42 75.97 L1029.98 78.64 L1035.55 81.33 L1041.12 84.04 L1046.69 86.75 L1052.25 89.47 L1057.8 92.2"/>
<path d="M760.4 240.7 L761.19 237.82 L762.02 234.94 L762.88 232.06 L763.78 229.19 L764.71 226.31 L765.67 223.43 L766.66 220.55 L767.69 217.68 L768.75 214.8 L769.83 211.92 L770.96 209.04 L772.11 206.17 L773.29 203.29 L774.5 200.42 L775.75 197.54 L777.02 194.66 L778.32 191.79 L779.65 188.91 L781.02 186.04 L782.4 183.16 L783.82 180.29 L785.27 177.42 L786.74 174.54 L788.24 171.67 L789.77 168.8 L791.32 165.92 L792.9 163.05 L794.51 160.18 L796.14 157.31 L797.79 154.44 L799.47 151.57 L801.17 148.7 L802.9 145.83 L804.65 142.97 L806.42 140.1 L808.21 137.24 L810.03 134.37 L811.87 131.51 L813.72 128.65 L815.6 125.78 L817.49 122.93 L819.41 120.07 L821.34 117.21 L823.29 114.36 L825.26 111.5 L827.24 108.65 L829.24 105.81 L831.25 102.96 L833.28 100.12 L835.32 97.28 L837.37 94.44 L839.43 91.61 L841.5 88.79 L843.58 85.97 L845.67 83.16 L847.76 80.35 L849.86 77.55 L851.96 74.77 L854.05 71.99 L856.14 69.23 L858.23 66.49 L860.3 63.77 L862.34 61.08 L864.36 58.42 L866.33 55.8 L868.23 53.24 L870.05 50.76 L871.74 48.37 L873.23 46.13 L874.44 44.07 L875.21 42.28 L875.31 40.87 L874.45 39.95 L872.28 39.64 L868.58 39.97 L863.33 40.9 L856.7 42.33 L848.99 44.13"/>
<path d="M961.15 46.19 L966.08 48.44 L971.4 50.83 L977 53.32 L982.8 55.88 L988.73 58.49 L994.76 61.15 L1000.86 63.85 L1007.01 66.57 L1013.19 69.31 L1019.4 72.07 L1025.62 74.85 L1031.84 77.63 L1038.06 80.43 L1044.27 83.24 L1050.46 86.05 L1056.64 88.87 L1062.79 91.7 L1068.93 94.53 L1075.03 97.36 L1081.1 100.2"/>
</g>
<g clip-path="url(#mapclip)" fill="none" stroke="#ec84ef" stroke-width="1.39" stroke-dasharray="1.39 2.29">
<path d="M730.8 308.3 L729.3 306.55 L727.81 304.79 L726.34 303.04 L724.89 301.29 L723.45 299.54 L722.02 297.79 L720.62 296.04 L719.22 294.3 L717.85 292.55 L716.48 290.81 L715.14 289.07 L713.81 287.34 L712.49 285.61 L711.2 283.87 L709.91 282.15 L708.65 280.42 L707.4 278.7 L706.16 276.98 L704.94 275.27 L703.74 273.55 L702.55 271.85 L701.38 270.14 L700.22 268.44 L699.08 266.75 L697.95 265.06 L696.84 263.37 L695.75 261.69 L694.67 260.01 L693.6 258.34 L692.55 256.67 L691.51 255.01 L690.49 253.36 L689.48 251.71 L688.48 250.07 L687.5 248.43 L686.54 246.8 L685.58 245.18 L684.64 243.56 L683.71 241.95 L682.79 240.35 L681.89 238.76 L680.99 237.17 L680.11 235.59 L679.24 234.02 L678.38 232.46 L677.53 230.91 L676.69 229.37 L675.86 227.83 L675.03 226.31 L674.22 224.8 L673.41 223.29 L672.61 221.8 L671.82 220.32 L671.04 218.85 L670.26 217.39 L669.48 215.94 L668.71 214.5 L667.94 213.08 L667.18 211.67 L666.42 210.27 L665.66 208.89 L664.9 207.51 L664.14 206.16 L663.38 204.82 L662.62 203.49 L661.86 202.18 L661.1 200.88 L660.33 199.6 L659.55 198.34 L658.77 197.09 L657.99 195.86 L657.19 194.65 L656.39 193.45 L655.58 192.28 L654.76 191.12 L653.92 189.98 L653.07 188.86 L652.21 187.77 L651.33 186.69 L650.44 185.63 L649.53 184.6 L648.6 183.59 L647.64 182.6 L646.67 181.63 L645.68 180.69 L644.66 179.77 L643.61 178.88 L642.54 178.01 L641.44 177.16 L640.31 176.34 L639.15 175.55 L637.96 174.78 L636.73 174.04 L635.47 173.33 L634.18 172.65 L632.84 171.99 L631.47 171.37 L630.06 170.77 L628.6 170.2"/>
<path d="M719.5 313 L720.83 310.05 L722.2 307.09 L723.62 304.14 L725.08 301.19 L726.59 298.24 L728.14 295.29 L729.73 292.34 L731.37 289.39 L733.05 286.45 L734.77 283.5 L736.54 280.56 L738.34 277.62 L740.18 274.68 L742.07 271.74 L743.99 268.81 L745.95 265.87 L747.95 262.94 L749.99 260.01 L752.06 257.09 L754.17 254.17 L756.31 251.25 L758.49 248.33 L760.71 245.42 L762.95 242.51 L765.23 239.61 L767.54 236.71 L769.88 233.81 L772.26 230.92 L774.66 228.04 L777.09 225.15 L779.54 222.28 L782.03 219.41 L784.54 216.55 L787.07 213.69 L789.63 210.84 L792.21 208 L794.82 205.17 L797.45 202.34 L800.09 199.52 L802.76 196.71 L805.44 193.91 L808.15 191.12 L810.86 188.35 L813.6 185.58 L816.35 182.82 L819.11 180.08 L821.88 177.35 L824.67 174.63 L827.47 171.93 L830.27 169.25 L833.08 166.58 L835.9 163.93 L838.73 161.3 L841.56 158.69 L844.4 156.09 L847.23 153.53 L850.07 150.98 L852.91 148.46 L855.75 145.97 L858.59 143.51 L861.42 141.08 L864.25 138.68 L867.08 136.32 L869.9 133.99 L872.72 131.7 L875.53 129.46 L878.33 127.26 L881.13 125.12 L883.91 123.02 L886.69 120.98 L889.47 119 L892.23 117.08 L894.99 115.22 L897.75 113.44 L900.5 111.74 L903.25 110.12 L906 108.58 L908.76 107.14 L911.52 105.78 L914.29 104.54 L917.08 103.39 L919.88 102.36 L922.72 101.44 L925.58 100.64 L928.47 99.96 L931.42 99.42 L934.4 99 L937.45 98.71 L940.56 98.56 L943.73 98.54 L946.98 98.65 L950.31 98.9 L953.72 99.28 L957.22 99.8 L960.81 100.44 L964.49 101.2 L968.26 102.09 L972.13 103.09 L976.1 104.2"/>
<path d="M721.5 314.5 L720.74 310.92 L720.05 307.33 L719.42 303.75 L718.86 300.17 L718.37 296.59 L717.95 293 L717.59 289.42 L717.3 285.84 L717.08 282.26 L716.93 278.68 L716.84 275.11 L716.83 271.53 L716.88 267.96 L717 264.38 L717.18 260.81 L717.44 257.24 L717.76 253.67 L718.14 250.1 L718.6 246.54 L719.12 242.98 L719.7 239.42 L720.35 235.86 L721.07 232.3 L721.85 228.75 L722.69 225.2 L723.59 221.65 L724.56 218.11 L725.59 214.57 L726.69 211.03 L727.84 207.5 L729.05 203.97 L730.32 200.45 L731.65 196.94 L733.03 193.42 L734.47 189.92 L735.97 186.42 L737.52 182.92 L739.12 179.44 L740.77 175.96 L742.46 172.49 L744.21 169.03 L746 165.58 L747.84 162.14 L749.72 158.71 L751.63 155.29 L753.59 151.88 L755.58 148.49 L757.6 145.12 L759.65 141.76 L761.73 138.42 L763.83 135.1 L765.94 131.81 L768.07 128.53 L770.21 125.29 L772.36 122.07 L774.5 118.89 L776.63 115.74 L778.74 112.63 L780.83 109.57 L782.88 106.56 L784.88 103.61 L786.82 100.71 L788.68 97.89 L790.45 95.15 L792.1 92.5 L793.61 89.94 L794.95 87.5 L796.09 85.19 L796.99 83.02 L797.61 81.01 L797.9 79.19 L797.82 77.56 L797.3 76.14 L796.29 74.97 L794.73 74.05 L792.57 73.4 L789.75 73.03 L786.25 72.96 L782.02 73.17 L777.07 73.67 L771.39 74.44 L765 75.48 L757.93 76.77 L750.22 78.29 L741.92 80.01 L733.08 81.93"/>
<path d="M1076.76 84.01 L1080.37 86.25 L1084.35 88.62 L1088.64 91.12 L1093.19 93.72 L1097.96 96.41 L1102.93 99.2 L1108.04 102.05 L1113.27 104.97 L1118.61 107.96 L1124.02 110.99 L1129.49 114.07 L1135 117.2"/>
</g>
<g clip-path="url(#mapclip)" fill="none" stroke="#00fb73" stroke-width="1.39" stroke-dasharray="1.39 2.29">
<path d="M843.3 215.5 L842.91 213.25 L842.52 211 L842.15 208.75 L841.78 206.51 L841.42 204.26 L841.07 202.03 L840.73 199.79 L840.39 197.56 L840.07 195.33 L839.75 193.1 L839.43 190.88 L839.13 188.66 L838.84 186.45 L838.55 184.24 L838.27 182.03 L837.99 179.83 L837.73 177.64 L837.47 175.45 L837.22 173.26 L836.97 171.08 L836.74 168.91 L836.51 166.74 L836.28 164.57 L836.06 162.42 L835.85 160.27 L835.64 158.13 L835.44 156 L835.25 153.87 L835.06 151.76 L834.87 149.65 L834.69 147.55 L834.51 145.46 L834.33 143.39 L834.16 141.32 L833.99 139.26 L833.82 137.22 L833.65 135.19 L833.49 133.18 L833.32 131.18 L833.15 129.2 L832.98 127.23 L832.8 125.28 L832.62 123.35 L832.43 121.43 L832.24 119.54 L832.04 117.68 L831.83 115.83 L831.61 114.01 L831.37 112.22 L831.12 110.46 L830.85 108.72 L830.56 107.02 L830.24 105.36 L829.9 103.73 L829.53 102.14 L829.13 100.59 L828.69 99.09 L828.2 97.63 L827.68 96.23 L827.1 94.87 L826.46 93.58 L825.76 92.35 L825 91.17 L824.15 90.07 L823.23 89.04 L822.22 88.08 L821.11 87.2 L819.89 86.4 L818.57 85.69 L817.12 85.06 L815.55 84.52 L813.84 84.08 L811.98 83.73 L809.98 83.49 L807.82 83.33 L805.5 83.28 L803.01 83.33 L800.35 83.48 L797.52 83.72 L794.52 84.07 L791.34 84.51 L787.99 85.04 L784.46 85.66 L780.77 86.37 L776.91 87.17 L772.89 88.05 L768.71 89 L764.38 90.03 L759.91 91.14 L755.3 92.3 L750.56 93.54 L745.69 94.83 L740.7 96.18 L735.6 97.58 L730.4 99.04 L725.11 100.54 L719.72 102.08 L714.25 103.67 L708.7 105.3"/>
<path d="M846 213.6 L847.37 211.25 L848.75 208.9 L850.14 206.55 L851.53 204.2 L852.94 201.86 L854.34 199.53 L855.76 197.19 L857.18 194.86 L858.61 192.54 L860.05 190.22 L861.49 187.9 L862.93 185.59 L864.39 183.28 L865.84 180.98 L867.3 178.68 L868.77 176.39 L870.24 174.11 L871.71 171.83 L873.18 169.56 L874.66 167.29 L876.15 165.03 L877.63 162.78 L879.12 160.54 L880.61 158.3 L882.1 156.08 L883.59 153.86 L885.09 151.66 L886.58 149.46 L888.08 147.27 L889.58 145.1 L891.07 142.94 L892.57 140.79 L894.07 138.66 L895.57 136.54 L897.07 134.43 L898.57 132.34 L900.07 130.27 L901.57 128.22 L903.06 126.19 L904.56 124.17 L906.06 122.18 L907.56 120.22 L909.06 118.27 L910.56 116.36 L912.06 114.47 L913.57 112.62 L915.08 110.79 L916.59 109 L918.1 107.25 L919.63 105.54 L921.15 103.87 L922.69 102.24 L924.24 100.66 L925.8 99.13 L927.38 97.66 L928.97 96.24 L930.59 94.89 L932.23 93.6 L933.89 92.38 L935.59 91.23 L937.33 90.16 L939.11 89.17 L940.94 88.26 L942.81 87.45 L944.75 86.72 L946.75 86.09 L948.83 85.56 L950.98 85.13 L953.21 84.81 L955.53 84.58 L957.95 84.47 L960.47 84.46 L963.09 84.56 L965.82 84.77 L968.66 85.08 L971.62 85.5 L974.69 86.01 L977.88 86.63 L981.18 87.34 L984.6 88.15 L988.14 89.04 L991.78 90.02 L995.53 91.08 L999.39 92.22 L1003.35 93.43 L1007.4 94.71 L1011.55 96.06 L1015.78 97.46 L1020.09 98.93 L1024.49 100.45 L1028.95 102.02 L1033.48 103.64 L1038.08 105.31 L1042.73 107.01 L1047.43 108.76 L1052.19 110.55 L1056.99 112.37 L1061.83 114.22 L1066.7 116.1"/>
</g>
<g clip-path="url(#mapclip)" stroke="#ff0000" stroke-width="1.25" fill="none">
<path d="M730.4 261.03 h6.39 M733.59 257.83 v6.39"/>
<path d="M724.1 264.12 h6.39 M727.3 260.92 v6.39"/>
<path d="M731.68 261.62 h6.39 M734.88 258.42 v6.39"/>
<path d="M727.85 266.1 h6.39 M731.05 262.91 v6.39"/>
<path d="M724.67 264.35 h6.39 M727.87 261.15 v6.39"/>
<path d="M726.06 263.67 h6.39 M729.26 260.47 v6.39"/>
<path d="M729.66 243.93 h6.39 M732.85 240.74 v6.39"/>
<path d="M725.52 242.41 h6.39 M728.72 239.21 v6.39"/>
<path d="M725.68 242.25 h6.39 M728.88 239.06 v6.39"/>
<path d="M730.52 243.35 h6.39 M733.71 240.15 v6.39"/>
<path d="M757.2 240.7 h6.39 M760.4 237.5 v6.39"/>
<path d="M727.61 308.3 h6.39 M730.8 305.11 v6.39"/>
<path d="M716.31 313 h6.39 M719.5 309.81 v6.39"/>
<path d="M718.31 314.5 h6.39 M721.5 311.31 v6.39"/>
<path d="M840.11 215.5 h6.39 M843.3 212.31 v6.39"/>
<path d="M842.81 213.6 h6.39 M846 210.41 v6.39"/>
</g>
<g clip-path="url(#mapclip)" fill="none" stroke-width="2.08" stroke-linejoin="round">
<path d="M736.1 239.55 L732.89 239.76 L729.57 240.39 L726.19 241.42 L722.8 242.84 L719.48 244.61 L716.29 246.71 L713.3 249.1 L710.55 251.73 L708.12 254.55 L706.05 257.52 L704.38 260.6 L703.14 263.72 L702.36 266.83 L702.04 269.89 L702.18 272.85 L702.78 275.67 L703.82 278.29 L705.27 280.68 L707.1 282.8 L709.26 284.61 L711.72 286.1 L714.42 287.24 L717.31 288.01 L720.34 288.4 L723.47 288.4 L726.63 288.01 L729.78 287.24 L732.88 286.1 L735.88 284.61 L738.74 282.8 L741.42 280.68 L743.89 278.29 L746.11 275.67 L748.06 272.85 L749.71 269.89 L751.03 266.83 L752.02 263.72 L752.66 260.6 L752.93 257.52 L752.83 254.55 L752.35 251.73 L751.49 249.1 L750.26 246.71 L748.68 244.61 L746.74 242.84 L744.49 241.42 L741.94 240.39 L739.13 239.76 L736.1 239.55" stroke="#ff1d00"/>
<path d="M746.38 218.75 L743.15 218.97 L739.77 219.61 L736.27 220.65 L732.74 222.09 L729.24 223.89 L725.84 226.02 L722.6 228.43 L719.6 231.08 L716.88 233.93 L714.51 236.92 L712.53 240 L710.98 243.12 L709.89 246.23 L709.27 249.28 L709.12 252.23 L709.44 255.02 L710.22 257.62 L711.43 259.98 L713.05 262.08 L715.03 263.87 L717.34 265.34 L719.92 266.46 L722.74 267.22 L725.73 267.6 L728.85 267.6 L732.06 267.22 L735.29 266.46 L738.5 265.34 L741.65 263.87 L744.69 262.08 L747.58 259.98 L750.29 257.62 L752.77 255.02 L755 252.23 L756.95 249.28 L758.58 246.23 L759.88 243.12 L760.82 240 L761.4 236.92 L761.59 233.93 L761.4 231.08 L760.8 228.43 L759.82 226.02 L758.44 223.89 L756.69 222.09 L754.58 220.65 L752.14 219.61 L749.39 218.97 L746.38 218.75" stroke="#dd11ff"/>
<path d="M720.16 291.35 L717.01 291.56 L713.85 292.16 L710.74 293.16 L707.73 294.52 L704.88 296.24 L702.25 298.28 L699.88 300.61 L697.83 303.18 L696.15 305.96 L694.86 308.9 L694 311.95 L693.59 315.06 L693.63 318.18 L694.12 321.26 L695.05 324.26 L696.41 327.11 L698.15 329.79 L700.25 332.23 L702.65 334.41 L705.31 336.28 L708.18 337.82 L711.19 339 L714.29 339.79 L717.43 340.2 L720.55 340.2 L723.61 339.79 L726.55 339 L729.34 337.82 L731.93 336.28 L734.29 334.41 L736.4 332.23 L738.22 329.79 L739.73 327.11 L740.92 324.26 L741.78 321.26 L742.29 318.18 L742.45 315.06 L742.26 311.95 L741.72 308.9 L740.83 305.96 L739.61 303.18 L738.06 300.61 L736.21 298.28 L734.07 296.24 L731.67 294.52 L729.04 293.16 L726.22 292.16 L723.24 291.56 L720.16 291.35" stroke="#ec84ef"/>
<path d="M844.72 188.55 L841.55 188.77 L838.31 189.43 L835.06 190.51 L831.85 191.99 L828.75 193.83 L825.81 196 L823.09 198.45 L820.63 201.15 L818.48 204.02 L816.69 207.04 L815.28 210.13 L814.28 213.25 L813.71 216.36 L813.57 219.39 L813.87 222.31 L814.6 225.07 L815.73 227.62 L817.25 229.95 L819.12 232 L821.31 233.76 L823.78 235.2 L826.48 236.29 L829.38 237.03 L832.41 237.4 L835.54 237.4 L838.7 237.03 L841.85 236.29 L844.95 235.2 L847.93 233.76 L850.77 232 L853.41 229.95 L855.81 227.62 L857.95 225.07 L859.78 222.31 L861.28 219.39 L862.43 216.36 L863.21 213.25 L863.6 210.13 L863.61 207.04 L863.22 204.02 L862.45 201.15 L861.31 198.45 L859.81 196 L857.96 193.83 L855.81 191.99 L853.37 190.51 L850.68 189.43 L847.78 188.77 L844.72 188.55" stroke="#00fb73"/>
</g>
<g clip-path="url(#mapclip)" fill="none" stroke-width="1.39" stroke-linecap="square">
<path d="M846.1 59.1 L837.65 60.36 L827.19 62.68 L814.94 65.87 L801.23 69.73 L786.39 74.1 L770.7 78.86 L754.4 83.9" stroke="#666666"/>
<path d="M845.6 63.9 L840.95 65.4 L836.1 67.03 L831.06 68.78 L825.85 70.63 L820.49 72.58 L815 74.6 L809.4 76.7" stroke="#666666"/>
<path d="M799.4 120.6 L800.98 118.96 L802.56 117.31 L804.16 115.67 L805.76 114.03 L807.36 112.39 L808.98 110.74 L810.6 109.1" stroke="#666666"/>
<path d="M933.3 85.6 L928.13 78.79 L922.96 72.05 L917.81 65.41 L912.71 58.95 L907.68 52.78 L902.76 47.19 L897.8 42.8" stroke="#666666"/>
<path d="M993.3 70.6 L1005.79 75.89 L1018.3 81.23 L1030.79 86.6 L1043.23 92 L1055.59 97.42 L1067.85 102.85 L1080 108.3" stroke="#666666"/>
<path d="M1055.6 97.8 L1060.57 100.78 L1065.53 103.77 L1070.47 106.77 L1075.39 109.79 L1080.29 112.82 L1085.16 115.85 L1090 118.9" stroke="#666666"/>
<path d="M1004.4 135.3 L1000.47 135.42 L996.64 135.68 L992.92 136.07 L989.28 136.59 L985.74 137.23 L982.28 138 L978.9 138.9" stroke="#666666"/>
<path d="M1030 146.1 L1032.35 147.01 L1034.72 147.94 L1037.09 148.88 L1039.48 149.84 L1041.88 150.81 L1044.28 151.8 L1046.7 152.8" stroke="#666666"/>
<path d="M1042.2 143.3 L1046.27 146.3 L1050.31 149.3 L1054.32 152.31 L1058.29 155.33 L1062.23 158.35 L1066.14 161.37 L1070 164.4" stroke="#666666"/>
<path d="M1100 128.9 L1104.45 130.77 L1108.9 132.65 L1113.35 134.54 L1117.79 136.44 L1122.24 138.35 L1126.67 140.27 L1131.1 142.2" stroke="#666666"/>
<path d="M1134.4 127.2 L1136.01 128 L1137.62 128.8 L1139.23 129.6 L1140.83 130.4 L1142.42 131.2 L1144.01 132 L1145.6 132.8" stroke="#666666"/>
<path d="M1155.6 174.4 L1156.9 175.91 L1158.18 177.42 L1159.45 178.93 L1160.71 180.44 L1161.96 181.96 L1163.18 183.48 L1164.4 185" stroke="#666666"/>
<path d="M1303.3 190 L1304.51 190.6 L1305.72 191.2 L1306.92 191.8 L1308.12 192.4 L1309.32 193 L1310.51 193.6 L1311.7 194.2" stroke="#666666"/>
<path d="M781.1 132 L778.07 132.6 L775 133.25 L771.87 133.95 L768.7 134.7 L765.48 135.49 L762.21 136.32 L758.9 137.2" stroke="#666666"/>
<path d="M614 131.3 L606.79 133.01 L599.43 134.8 L591.93 136.66 L584.29 138.58 L576.53 140.56 L568.67 142.6 L560.7 144.7" stroke="#ff1d00"/>
<path d="M640 137.5 L637.44 137.76 L634.82 138.06 L632.12 138.38 L629.37 138.74 L626.54 139.13 L623.65 139.55 L620.7 140" stroke="#ff1d00"/>
<path d="M752.7 87.1 L749.7 87.41 L746.51 87.8 L743.12 88.27 L739.54 88.82 L735.78 89.44 L731.83 90.14 L727.7 90.9" stroke="#ff1d00"/>
<path d="M1046.1 144.4 L1050.92 146.64 L1055.76 148.93 L1060.63 151.25 L1065.51 153.61 L1070.4 156.01 L1075.3 158.44 L1080.2 160.9" stroke="#ff1d00"/>
<path d="M1062.2 175 L1069.6 178.46 L1077.02 182.03 L1084.45 185.68 L1091.89 189.42 L1099.32 193.24 L1106.73 197.14 L1114.1 201.1" stroke="#ff1d00"/>
<path d="M1261.7 204.4 L1264.36 206.75 L1266.96 209.11 L1269.5 211.47 L1271.99 213.82 L1274.42 216.18 L1276.79 218.54 L1279.1 220.9" stroke="#ff1d00"/>
<path d="M746 84 L741.25 84.89 L736.26 85.87 L731.03 86.94 L725.58 88.09 L719.92 89.32 L714.05 90.63 L708 92" stroke="#dd11ff"/>
<path d="M879.4 66.1 L880.53 65.07 L881.65 64.05 L882.77 63.04 L883.88 62.04 L884.99 61.05 L886.1 60.07 L887.2 59.1" stroke="#dd11ff"/>
<path d="M1052.2 111.7 L1054.28 112.72 L1056.35 113.75 L1058.43 114.78 L1060.5 115.81 L1062.57 116.84 L1064.64 117.87 L1066.7 118.9" stroke="#dd11ff"/>
<path d="M1057.8 92.2 L1061.97 94.26 L1066.12 96.33 L1070.27 98.4 L1074.4 100.47 L1078.52 102.54 L1082.62 104.62 L1086.7 106.7" stroke="#dd11ff"/>
<path d="M1081.1 100.2 L1087.34 103.15 L1093.54 106.1 L1099.71 109.05 L1105.82 112.01 L1111.9 114.97 L1117.92 117.94 L1123.9 120.9" stroke="#dd11ff"/>
<path d="M628.6 170.2 L628.51 170.17 L628.43 170.14 L628.34 170.11 L628.26 170.09 L628.17 170.06 L628.09 170.03 L628 170" stroke="#ec84ef"/>
<path d="M976.1 104.2 L982.4 106.28 L988.9 108.58 L995.58 111.09 L1002.44 113.78 L1009.46 116.64 L1016.62 119.65 L1023.9 122.8" stroke="#ec84ef"/>
<path d="M1135 117.2 L1136.11 117.88 L1137.22 118.56 L1138.33 119.24 L1139.44 119.93 L1140.56 120.62 L1141.68 121.31 L1142.8 122" stroke="#ec84ef"/>
<path d="M708.7 105.3 L706.62 105.96 L704.53 106.63 L702.43 107.29 L700.33 107.97 L698.22 108.64 L696.11 109.32 L694 110" stroke="#00fb73"/>
<path d="M1066.7 116.1 L1068.15 116.65 L1069.6 117.2 L1071.05 117.76 L1072.51 118.31 L1073.97 118.87 L1075.43 119.44 L1076.9 120" stroke="#00fb73"/>
</g>
<g clip-path="url(#mapclip)" stroke="#ff6347" stroke-width="1.81" fill="none">
<path d="M559.45 144.7 h2.5 M560.7 143.45 v2.5"/>
<path d="M619.45 140 h2.5 M620.7 138.75 v2.5"/>
<path d="M726.45 90.9 h2.5 M727.7 89.65 v2.5"/>
<path d="M1078.95 160.9 h2.5 M1080.2 159.65 v2.5"/>
<path d="M1112.85 201.1 h2.5 M1114.1 199.85 v2.5"/>
<path d="M1277.85 220.9 h2.5 M1279.1 219.65 v2.5"/>
<path d="M706.75 92 h2.5 M708 90.75 v2.5"/>
<path d="M885.95 59.1 h2.5 M887.2 57.85 v2.5"/>
<path d="M1065.45 118.9 h2.5 M1066.7 117.65 v2.5"/>
<path d="M1085.45 106.7 h2.5 M1086.7 105.45 v2.5"/>
<path d="M1122.65 120.9 h2.5 M1123.9 119.65 v2.5"/>
<path d="M626.75 170 h2.5 M628 168.75 v2.5"/>
<path d="M1022.65 122.8 h2.5 M1023.9 121.55 v2.5"/>
<path d="M1141.55 122 h2.5 M1142.8 120.75 v2.5"/>
<path d="M692.75 110 h2.5 M694 108.75 v2.5"/>
<path d="M1075.65 120 h2.5 M1076.9 118.75 v2.5"/>
</g>
<g font-family="'DejaVu Sans','Liberation Sans',sans-serif" font-size="11.11" fill="#ffffff" fill-opacity="0.94" text-anchor="middle">
<text x="727.37" y="267" letter-spacing="-0.46">STA</text>
<text x="734.85" y="246.2" letter-spacing="-0.49">NTA</text>
<text x="718.29" y="318.8" letter-spacing="-0.4">OER</text>
<text x="838.63" y="216" letter-spacing="-0.47">AND</text>
</g>
<g id="info" font-family="'DejaVu Sans Mono','Liberation Mono',monospace" font-size="13.89" fill="#ffffff">
<text x="316.3" y="30">UK009D</text>
<text x="316.3" y="43">Beg: 20251110 17:39:46 (sol = 228.22°)</text>
<text x="316.3" y="57">End: 20251110 23:20:23 (sol = 228.46°)</text>
<text x="316.3" y="69">--------------------------------------</text>
<text x="316.3" y="82">...: 19</text>
<text x="316.3" y="95">STA: 6</text>
<text x="316.3" y="108">NTA: 5</text>
<text x="316.3" y="122">OER: 3</text>
<text x="316.3" y="135">AND: 2</text>
</g>
<g fill="none" stroke="#ffffff" stroke-opacity="0.3" stroke-width="2.08" stroke-dasharray="2.08 3.44" stroke-dashoffset="-0.5">
<path d="M75 842.5 L75 641.5"/>
<path d="M219 842.5 L219 641.5"/>
<path d="M365 842.5 L365 641.5"/>
<path d="M506 842.5 L506 641.5"/>
<path d="M651 842.5 L651 641.5"/>
<path d="M797 842.5 L797 641.5"/>
<path d="M940 842.5 L940 641.5"/>
<path d="M1091 842.5 L1091 641.5"/>
<path d="M1239 842.5 L1239 641.5"/>
<path d="M1394 842.5 L1394 641.5"/>
<path d="M1548 842.5 L1548 641.5"/>
<path d="M1687 842.5 L1687 641.5"/>
</g>
<clipPath id="axclip"><rect x="20.5" y="641.5" width="1765" height="201"/></clipPath>
<g clip-path="url(#axclip)" font-family="'DejaVu Sans','Liberation Sans',sans-serif" font-size="27" fill="#ffffff" fill-opacity="0.3">
<text transform="translate(148.9,643.1) rotate(-90) scale(1,1.045)" text-anchor="end" x="0" y="0">APR</text>
<text transform="translate(294.4,645.5) rotate(-90) scale(1,1.045)" text-anchor="end" x="0" y="0">MAY</text>
<text transform="translate(436.4,641.5) rotate(-90) scale(1,1.045)" text-anchor="end" x="0" y="0">JUN</text>
<text transform="translate(577.4,641) rotate(-90) scale(1,1.045)" text-anchor="end" x="0" y="0">JUL</text>
<text transform="translate(723.9,642.4) rotate(-90) scale(1,1.045)" text-anchor="end" x="0" y="0">AUG</text>
<text transform="translate(872.4,643.7) rotate(-90) scale(1,1.045)" text-anchor="end" x="0" y="0">SEP</text>
<text transform="translate(1017.4,644.4) rotate(-90) scale(1,1.045)" text-anchor="end" x="0" y="0">OCT</text>
<text transform="translate(1169.9,646.3) rotate(-90) scale(1,1.045)" text-anchor="end" x="0" y="0">NOV</text>
<text transform="translate(1319.4,644.4) rotate(-90) scale(1,1.045)" text-anchor="end" x="0" y="0">DEC</text>
<text transform="translate(1468.9,640.2) rotate(-90) scale(1,1.045)" text-anchor="end" x="0" y="0">JAN</text>
<text transform="translate(1628.2,645.4) rotate(-90) scale(1,1.045)" text-anchor="end" x="0" y="0">FEB</text>
<text transform="translate(1766.2,644.4) rotate(-90) scale(1,1.045)" text-anchor="end" x="0" y="0">MAR</text>
</g>
<g font-family="'DejaVu Sans','Liberation Sans',sans-serif" font-size="11.11" fill="#ffffff" fill-opacity="0.93" text-anchor="middle">
<text x="116.57" y="832" letter-spacing="-0.65">KSE</text>
<text x="254.49" y="832" letter-spacing="-0.54">ETA</text>
<text x="176.13" y="815" letter-spacing="-0.51">AVB</text>
<text x="254.4" y="815" letter-spacing="-0.51">ELY</text>
<text x="323.64" y="815" letter-spacing="-0.39">CAM</text>
<text x="175.92" y="799" letter-spacing="-0.31">LYR</text>
<text x="205.81" y="782" letter-spacing="-0.5">HVI</text>
<text x="353.07" y="766" letter-spacing="-0.02">TAH</text>
<text x="495.13" y="832" letter-spacing="-0.39">NZC</text>
<text x="431.56" y="815" letter-spacing="-0.4">SSG</text>
<text x="372.56" y="799" letter-spacing="-0.35">JMC</text>
<text x="411.32" y="782" letter-spacing="-0.51">ARI</text>
<text x="710.18" y="832" letter-spacing="-0.6">NDA</text>
<text x="578.22" y="815" letter-spacing="-0.52">PCA</text>
<text x="720.39" y="815" letter-spacing="-0.42">AUD</text>
<text x="558.47" y="799" letter-spacing="-0.52">JPE</text>
<text x="670.97" y="799" letter-spacing="-0.47">PAU</text>
<text x="529.47" y="782" letter-spacing="-0.46">SZC</text>
<text x="618.15" y="782" letter-spacing="-0.44">CAP</text>
<text x="431.18" y="766" letter-spacing="-0.32">JEA</text>
<text x="480.79" y="766" letter-spacing="-0.56">JIP</text>
<text x="538.47" y="766" letter-spacing="-0.51">PPS</text>
<text x="578.3" y="766" letter-spacing="-0.57">ZCS</text>
<text x="632.55" y="766" letter-spacing="-0.54">GDR</text>
<text x="431.41" y="750" letter-spacing="-0.2">JRC</text>
<text x="544.13" y="750" letter-spacing="-0.4">CAN</text>
<text x="577.99" y="750" letter-spacing="-0.43">FAN</text>
<text x="680.89" y="750" letter-spacing="-0.42">PER</text>
<text x="441.12" y="733" letter-spacing="-0.49">COR</text>
<text x="657.65" y="733" letter-spacing="-0.58">SDA</text>
<text x="603.35" y="717" letter-spacing="-0.55">JXA</text>
<text x="715.56" y="717" letter-spacing="-0.59">KCG</text>
<text x="666.06" y="700" letter-spacing="-0.58">ERI</text>
<text x="808.88" y="815" letter-spacing="-0.46">AUR</text>
<text x="773.78" y="799" letter-spacing="-0.45">NIA</text>
<text x="853.41" y="832" letter-spacing="-0.51">SPE</text>
<text x="946.17" y="832" letter-spacing="-0.47">ARD</text>
<text x="1024.31" y="832" letter-spacing="-0.51">EGE</text>
<text x="930.79" y="815" letter-spacing="-0.46">DSX</text>
<text x="1010.38" y="815" letter-spacing="-0.52">OCU</text>
<text x="1049.5" y="799" letter-spacing="-0.46">STA</text>
<text x="817.59" y="782" letter-spacing="-0.61">NUE</text>
<text x="960.59" y="782" letter-spacing="-0.58">OCT</text>
<text x="1059.02" y="782" letter-spacing="-0.44">ORI</text>
<text x="969.7" y="766" letter-spacing="-0.53">DRA</text>
<text x="1072.94" y="766" letter-spacing="-0.32">LUM</text>
<text x="1112.47" y="766" letter-spacing="-0.53">RPU</text>
<text x="1177.48" y="766" letter-spacing="0.04">THA</text>
<text x="1048.68" y="750" letter-spacing="-0.54">CTA</text>
<text x="1048.53" y="733" letter-spacing="-0.56">LMI</text>
<text x="1108.22" y="700" letter-spacing="-0.35">SLD</text>
<text x="1122.62" y="684" letter-spacing="-0.36">KUM</text>
<text x="1142.08" y="832" letter-spacing="-0.49">NTA</text>
<text x="1137.79" y="815" letter-spacing="-0.4">OER</text>
<text x="1205.97" y="799" letter-spacing="-0.58">NOO</text>
<text x="1186.08" y="782" letter-spacing="-0.48">AMO</text>
<text x="1265.19" y="750" letter-spacing="-0.4">HYD</text>
<text x="1166.13" y="733" letter-spacing="-0.33">LEO</text>
<text x="1156.44" y="717" letter-spacing="-0.47">AND</text>
<text x="1210.85" y="700" letter-spacing="-0.48">ORS</text>
<text x="1284.52" y="832" letter-spacing="-0.46">MON</text>
<text x="1343.56" y="832" letter-spacing="-0.09">URS</text>
<text x="1411.5" y="832" letter-spacing="-0.39">AHY</text>
<text x="1485.37" y="832" letter-spacing="-0.38">GUM</text>
<text x="1534.97" y="832" letter-spacing="-0.59">OHY</text>
<text x="1254.29" y="815" letter-spacing="-0.61">DKD</text>
<text x="1303.78" y="815" letter-spacing="-0.46">DSV</text>
<text x="1352.69" y="815" letter-spacing="-0.47">ALY</text>
<text x="1407.21" y="815" letter-spacing="-0.51">JLE</text>
<text x="1471.66" y="815" letter-spacing="-0.39">SCC</text>
<text x="1558.69" y="815" letter-spacing="-0.45">FEV</text>
<text x="1353.23" y="799" letter-spacing="-0.42">COM</text>
<text x="1470.11" y="799" letter-spacing="-0.54">NCC</text>
<text x="1563.28" y="799" letter-spacing="-0.38">FED</text>
<text x="1254.78" y="782" letter-spacing="-0.47">DPC</text>
<text x="1328.24" y="782" letter-spacing="-0.61">XVI</text>
<text x="1407.34" y="782" letter-spacing="-0.53">QUA</text>
<text x="1259.12" y="766" letter-spacing="-0.43">PSU</text>
<text x="1470.22" y="766" letter-spacing="-0.41">XCB</text>
<text x="1480.99" y="750" letter-spacing="-0.38">XUM</text>
<text x="1274.17" y="733" letter-spacing="-0.45">EHY</text>
<text x="1499.46" y="733" letter-spacing="-0.49">ECV</text>
<text x="1274.32" y="717" letter-spacing="-0.55">DAD</text>
<text x="1299.91" y="700" letter-spacing="-0.29">GEM</text>
<text x="1735.39" y="832" letter-spacing="-0.54">XHE</text>
<text x="1768.97" y="832" letter-spacing="-0.66">EVI</text>
<text x="1559.2" y="782" letter-spacing="-0.46">AAN</text>
</g>
<path d="M105.92 834 H130.08" stroke="#ec84ef" stroke-width="4.17" fill="none"/>
<path d="M164.92 834 H345.08" stroke="#ec84ef" stroke-width="4.17" fill="none"/>
<path d="M164.92 818 H189.08" stroke="#dd11ff" stroke-width="4.17" fill="none"/>
<path d="M223.92 818 H287.08" stroke="#dd11ff" stroke-width="4.17" fill="none"/>
<path d="M311.92 818 H341.08" stroke="#dd11ff" stroke-width="4.17" fill="none"/>
<path d="M164.92 802 H189.08" stroke="#ff1d00" stroke-width="4.17" fill="none"/>
<path d="M193.92 785 H218.08" stroke="#ffb20d" stroke-width="4.17" fill="none"/>
<path d="M340.92 769 H370.08" stroke="#fff000" stroke-width="4.17" fill="none"/>
<path d="M365.92 834 H625.08" stroke="#ec84ef" stroke-width="4.17" fill="none"/>
<path d="M365.92 818 H493.08" stroke="#dd11ff" stroke-width="4.17" fill="none"/>
<path d="M257.92 802 H488.08" stroke="#ff1d00" stroke-width="4.17" fill="none"/>
<path d="M321.92 785 H507.08" stroke="#ffb20d" stroke-width="4.17" fill="none"/>
<path d="M635.92 834 H787.08" stroke="#ec84ef" stroke-width="4.17" fill="none"/>
<path d="M507.92 818 H654.08" stroke="#dd11ff" stroke-width="4.17" fill="none"/>
<path d="M703.92 818 H738.08" stroke="#dd11ff" stroke-width="4.17" fill="none"/>
<path d="M507.92 802 H615.08" stroke="#ff1d00" stroke-width="4.17" fill="none"/>
<path d="M625.92 802 H718.08" stroke="#ff1d00" stroke-width="4.17" fill="none"/>
<path d="M517.92 785 H542.08" stroke="#ffb20d" stroke-width="4.17" fill="none"/>
<path d="M556.92 785 H684.08" stroke="#ffb20d" stroke-width="4.17" fill="none"/>
<path d="M409.92 769 H448.08" stroke="#fff000" stroke-width="4.17" fill="none"/>
<path d="M468.92 769 H493.08" stroke="#fff000" stroke-width="4.17" fill="none"/>
<path d="M527.92 769 H546.08" stroke="#fff000" stroke-width="4.17" fill="none"/>
<path d="M561.92 769 H591.08" stroke="#fff000" stroke-width="4.17" fill="none"/>
<path d="M615.92 769 H649.08" stroke="#fff000" stroke-width="4.17" fill="none"/>
<path d="M419.92 752 H444.08" stroke="#a4ff28" stroke-width="4.17" fill="none"/>
<path d="M532.92 752 H556.08" stroke="#a4ff28" stroke-width="4.17" fill="none"/>
<path d="M566.92 752 H591.08" stroke="#a4ff28" stroke-width="4.17" fill="none"/>
<path d="M620.92 752 H743.08" stroke="#a4ff28" stroke-width="4.17" fill="none"/>
<path d="M429.92 736 H453.08" stroke="#59d200" stroke-width="4.17" fill="none"/>
<path d="M576.92 736 H733.08" stroke="#59d200" stroke-width="4.17" fill="none"/>
<path d="M591.92 720 H615.08" stroke="#00fb73" stroke-width="4.17" fill="none"/>
<path d="M654.92 720 H772.08" stroke="#00fb73" stroke-width="4.17" fill="none"/>
<path d="M595.92 703 H733.08" stroke="#00e0ff" stroke-width="4.17" fill="none"/>
<path d="M772.92 818 H846.08" stroke="#dd11ff" stroke-width="4.17" fill="none"/>
<path d="M728.92 802 H826.08" stroke="#ff1d00" stroke-width="4.17" fill="none"/>
<path d="M806.92 834 H899.08" stroke="#ec84ef" stroke-width="4.17" fill="none"/>
<path d="M919.92 834 H973.08" stroke="#ec84ef" stroke-width="4.17" fill="none"/>
<path d="M983.92 834 H1066.08" stroke="#ec84ef" stroke-width="4.17" fill="none"/>
<path d="M870.92 818 H988.08" stroke="#dd11ff" stroke-width="4.17" fill="none"/>
<path d="M1002.92 818 H1017.08" stroke="#dd11ff" stroke-width="4.17" fill="none"/>
<path d="M948.92 802 H1150.08" stroke="#ff1d00" stroke-width="4.17" fill="none"/>
<path d="M806.92 785 H831.08" stroke="#ffb20d" stroke-width="4.17" fill="none"/>
<path d="M953.92 785 H973.08" stroke="#ffb20d" stroke-width="4.17" fill="none"/>
<path d="M988.92 785 H1125.08" stroke="#ffb20d" stroke-width="4.17" fill="none"/>
<path d="M958.92 769 H988.08" stroke="#fff000" stroke-width="4.17" fill="none"/>
<path d="M1061.92 769 H1086.08" stroke="#fff000" stroke-width="4.17" fill="none"/>
<path d="M1100.92 769 H1125.08" stroke="#fff000" stroke-width="4.17" fill="none"/>
<path d="M1159.92 769 H1194.08" stroke="#fff000" stroke-width="4.17" fill="none"/>
<path d="M968.92 752 H1135.08" stroke="#a4ff28" stroke-width="4.17" fill="none"/>
<path d="M993.92 736 H1105.08" stroke="#59d200" stroke-width="4.17" fill="none"/>
<path d="M1091.92 703 H1120.08" stroke="#00e0ff" stroke-width="4.17" fill="none"/>
<path d="M1110.92 687 H1135.08" stroke="#000ecd" stroke-width="4.17" fill="none"/>
<path d="M1081.92 834 H1203.08" stroke="#ec84ef" stroke-width="4.17" fill="none"/>
<path d="M1061.92 818 H1213.08" stroke="#dd11ff" stroke-width="4.17" fill="none"/>
<path d="M1159.92 802 H1248.08" stroke="#ff1d00" stroke-width="4.17" fill="none"/>
<path d="M1154.92 785 H1218.08" stroke="#ffb20d" stroke-width="4.17" fill="none"/>
<path d="M1184.92 752 H1346.08" stroke="#a4ff28" stroke-width="4.17" fill="none"/>
<path d="M1115.92 736 H1223.08" stroke="#59d200" stroke-width="4.17" fill="none"/>
<path d="M1071.92 720 H1243.08" stroke="#00fb73" stroke-width="4.17" fill="none"/>
<path d="M1198.92 703 H1223.08" stroke="#00e0ff" stroke-width="4.17" fill="none"/>
<path d="M1243.92 834 H1326.08" stroke="#ec84ef" stroke-width="4.17" fill="none"/>
<path d="M1336.92 834 H1355.08" stroke="#ec84ef" stroke-width="4.17" fill="none"/>
<path d="M1380.92 834 H1444.08" stroke="#ec84ef" stroke-width="4.17" fill="none"/>
<path d="M1458.92 834 H1512.08" stroke="#ec84ef" stroke-width="4.17" fill="none"/>
<path d="M1522.92 834 H1547.08" stroke="#ec84ef" stroke-width="4.17" fill="none"/>
<path d="M1243.92 818 H1267.08" stroke="#dd11ff" stroke-width="4.17" fill="none"/>
<path d="M1292.92 818 H1316.08" stroke="#dd11ff" stroke-width="4.17" fill="none"/>
<path d="M1341.92 818 H1365.08" stroke="#dd11ff" stroke-width="4.17" fill="none"/>
<path d="M1385.92 818 H1429.08" stroke="#dd11ff" stroke-width="4.17" fill="none"/>
<path d="M1458.92 818 H1483.08" stroke="#dd11ff" stroke-width="4.17" fill="none"/>
<path d="M1547.92 818 H1571.08" stroke="#dd11ff" stroke-width="4.17" fill="none"/>
<path d="M1257.92 802 H1444.08" stroke="#ff1d00" stroke-width="4.17" fill="none"/>
<path d="M1458.92 802 H1483.08" stroke="#ff1d00" stroke-width="4.17" fill="none"/>
<path d="M1551.92 802 H1576.08" stroke="#ff1d00" stroke-width="4.17" fill="none"/>
<path d="M1243.92 785 H1267.08" stroke="#ffb20d" stroke-width="4.17" fill="none"/>
<path d="M1316.92 785 H1341.08" stroke="#ffb20d" stroke-width="4.17" fill="none"/>
<path d="M1395.92 785 H1419.08" stroke="#ffb20d" stroke-width="4.17" fill="none"/>
<path d="M1247.92 769 H1272.08" stroke="#fff000" stroke-width="4.17" fill="none"/>
<path d="M1424.92 769 H1512.08" stroke="#fff000" stroke-width="4.17" fill="none"/>
<path d="M1468.92 752 H1493.08" stroke="#a4ff28" stroke-width="4.17" fill="none"/>
<path d="M1262.92 736 H1292.08" stroke="#59d200" stroke-width="4.17" fill="none"/>
<path d="M1488.92 736 H1512.08" stroke="#59d200" stroke-width="4.17" fill="none"/>
<path d="M1262.92 720 H1287.08" stroke="#00fb73" stroke-width="4.17" fill="none"/>
<path d="M1272.92 703 H1326.08" stroke="#00e0ff" stroke-width="4.17" fill="none"/>
<path d="M1723.92 834 H1748.08" stroke="#ec84ef" stroke-width="4.17" fill="none"/>
<path d="M1757.92 834 H1782.08" stroke="#ec84ef" stroke-width="4.17" fill="none"/>
<path d="M1463.92 785 H1650.08" stroke="#ffb20d" stroke-width="4.17" fill="none"/>
<path d="M1139.5 842.5 V641.5" stroke="#ff0000" stroke-width="1.39" stroke-dasharray="5.14 2.22" fill="none"/>
<path d="M1140.5 842.5 V641.5" stroke="#ff0000" stroke-width="1.39" stroke-dasharray="5.14 2.22" fill="none"/>
<g stroke="#ffffff" stroke-width="2.08" fill="none">
<path d="M113.83 834 h8.34 M118 829.83 v8.34"/>
<path d="M240.83 834 h8.34 M245 829.83 v8.34"/>
<path d="M172.83 818 h8.34 M177 813.83 v8.34"/>
<path d="M255.83 818 h8.34 M260 813.83 v8.34"/>
<path d="M323.83 818 h8.34 M328 813.83 v8.34"/>
<path d="M174.83 802 h8.34 M179 797.83 v8.34"/>
<path d="M201.83 785 h8.34 M206 780.83 v8.34"/>
<path d="M355.83 769 h8.34 M360 764.83 v8.34"/>
<path d="M510.83 834 h8.34 M515 829.83 v8.34"/>
<path d="M437.83 818 h8.34 M442 813.83 v8.34"/>
<path d="M378.83 802 h8.34 M383 797.83 v8.34"/>
<path d="M400.83 785 h8.34 M405 780.83 v8.34"/>
<path d="M706.83 834 h8.34 M711 829.83 v8.34"/>
<path d="M598.83 818 h8.34 M603 813.83 v8.34"/>
<path d="M716.83 818 h8.34 M721 813.83 v8.34"/>
<path d="M544.83 802 h8.34 M549 797.83 v8.34"/>
<path d="M682.83 802 h8.34 M687 797.83 v8.34"/>
<path d="M525.83 785 h8.34 M530 780.83 v8.34"/>
<path d="M638.83 785 h8.34 M643 780.83 v8.34"/>
<path d="M426.83 769 h8.34 M431 764.83 v8.34"/>
<path d="M476.83 769 h8.34 M481 764.83 v8.34"/>
<path d="M535.83 769 h8.34 M540 764.83 v8.34"/>
<path d="M570.83 769 h8.34 M575 764.83 v8.34"/>
<path d="M630.83 769 h8.34 M635 764.83 v8.34"/>
<path d="M427.83 752 h8.34 M432 747.83 v8.34"/>
<path d="M539.83 752 h8.34 M544 747.83 v8.34"/>
<path d="M574.83 752 h8.34 M579 747.83 v8.34"/>
<path d="M703.83 752 h8.34 M708 747.83 v8.34"/>
<path d="M437.83 736 h8.34 M442 731.83 v8.34"/>
<path d="M630.83 736 h8.34 M635 731.83 v8.34"/>
<path d="M598.83 720 h8.34 M603 715.83 v8.34"/>
<path d="M726.83 720 h8.34 M731 715.83 v8.34"/>
<path d="M687.83 703 h8.34 M692 698.83 v8.34"/>
<path d="M793.83 818 h8.34 M798 813.83 v8.34"/>
<path d="M741.83 802 h8.34 M746 797.83 v8.34"/>
<path d="M833.83 834 h8.34 M838 829.83 v8.34"/>
<path d="M961.83 834 h8.34 M966 829.83 v8.34"/>
<path d="M986.83 834 h8.34 M991 829.83 v8.34"/>
<path d="M939.83 818 h8.34 M944 813.83 v8.34"/>
<path d="M1005.83 818 h8.34 M1010 813.83 v8.34"/>
<path d="M1074.83 802 h8.34 M1079 797.83 v8.34"/>
<path d="M814.83 785 h8.34 M819 780.83 v8.34"/>
<path d="M959.83 785 h8.34 M964 780.83 v8.34"/>
<path d="M1040.83 785 h8.34 M1045 780.83 v8.34"/>
<path d="M973.83 769 h8.34 M978 764.83 v8.34"/>
<path d="M1069.83 769 h8.34 M1074 764.83 v8.34"/>
<path d="M1108.83 769 h8.34 M1113 764.83 v8.34"/>
<path d="M1177.83 769 h8.34 M1182 764.83 v8.34"/>
<path d="M1094.83 752 h8.34 M1099 747.83 v8.34"/>
<path d="M1038.83 736 h8.34 M1043 731.83 v8.34"/>
<path d="M1101.83 703 h8.34 M1106 698.83 v8.34"/>
<path d="M1118.83 687 h8.34 M1123 682.83 v8.34"/>
<path d="M1116.83 834 h8.34 M1121 829.83 v8.34"/>
<path d="M1152.83 818 h8.34 M1157 813.83 v8.34"/>
<path d="M1216.83 802 h8.34 M1221 797.83 v8.34"/>
<path d="M1187.83 785 h8.34 M1192 780.83 v8.34"/>
<path d="M1270.83 752 h8.34 M1275 747.83 v8.34"/>
<path d="M1167.83 736 h8.34 M1172 731.83 v8.34"/>
<path d="M1187.83 720 h8.34 M1192 715.83 v8.34"/>
<path d="M1206.83 703 h8.34 M1211 698.83 v8.34"/>
<path d="M1295.83 834 h8.34 M1300 829.83 v8.34"/>
<path d="M1341.83 834 h8.34 M1346 829.83 v8.34"/>
<path d="M1412.83 834 h8.34 M1417 829.83 v8.34"/>
<path d="M1481.83 834 h8.34 M1486 829.83 v8.34"/>
<path d="M1530.83 834 h8.34 M1535 829.83 v8.34"/>
<path d="M1250.83 818 h8.34 M1255 813.83 v8.34"/>
<path d="M1299.83 818 h8.34 M1304 813.83 v8.34"/>
<path d="M1349.83 818 h8.34 M1354 813.83 v8.34"/>
<path d="M1402.83 818 h8.34 M1407 813.83 v8.34"/>
<path d="M1466.83 818 h8.34 M1471 813.83 v8.34"/>
<path d="M1554.83 818 h8.34 M1559 813.83 v8.34"/>
<path d="M1304.83 802 h8.34 M1309 797.83 v8.34"/>
<path d="M1466.83 802 h8.34 M1471 797.83 v8.34"/>
<path d="M1559.83 802 h8.34 M1564 797.83 v8.34"/>
<path d="M1250.83 785 h8.34 M1255 780.83 v8.34"/>
<path d="M1324.83 785 h8.34 M1329 780.83 v8.34"/>
<path d="M1402.83 785 h8.34 M1407 780.83 v8.34"/>
<path d="M1255.83 769 h8.34 M1260 764.83 v8.34"/>
<path d="M1466.83 769 h8.34 M1471 764.83 v8.34"/>
<path d="M1476.83 752 h8.34 M1481 747.83 v8.34"/>
<path d="M1274.83 736 h8.34 M1279 731.83 v8.34"/>
<path d="M1496.83 736 h8.34 M1501 731.83 v8.34"/>
<path d="M1270.83 720 h8.34 M1275 715.83 v8.34"/>
<path d="M1299.83 703 h8.34 M1304 698.83 v8.34"/>
<path d="M1731.83 834 h8.34 M1736 829.83 v8.34"/>
<path d="M1765.83 834 h8.34 M1770 829.83 v8.34"/>
<path d="M1545.83 785 h8.34 M1550 780.83 v8.34"/>
</g>
<rect x="20.5" y="641.5" width="1765" height="201" fill="none" stroke="#ffffff" stroke-width="1"/>
<g stroke="#ffffff" stroke-width="1">
<path d="M19.5 842.5 v5.4"/>
<path d="M265.5 842.5 v5.4"/>
<path d="M510.5 842.5 v5.4"/>
<path d="M755.5 842.5 v5.4"/>
<path d="M1000.5 842.5 v5.4"/>
<path d="M1245.5 842.5 v5.4"/>
<path d="M1490.5 842.5 v5.4"/>
<path d="M1735.5 842.5 v5.4"/>
</g>
<g fill="#ffffff" fill-opacity="0.93" font-family="'DejaVu Sans','Liberation Sans',sans-serif" font-size="13.89" text-anchor="middle">
<text x="19.9" y="862">0</text>
<text x="265.04" y="862">50</text>
<text x="510.18" y="862">100</text>
<text x="755.32" y="862">150</text>
<text x="1000.46" y="862">200</text>
<text x="1245.59" y="862">250</text>
<text x="1490.73" y="862">300</text>
<text x="1735.87" y="862">350</text>
<text x="902.5" y="882">Solar longitude (deg)</text>
</g>
</svg>
</body>
</html>
